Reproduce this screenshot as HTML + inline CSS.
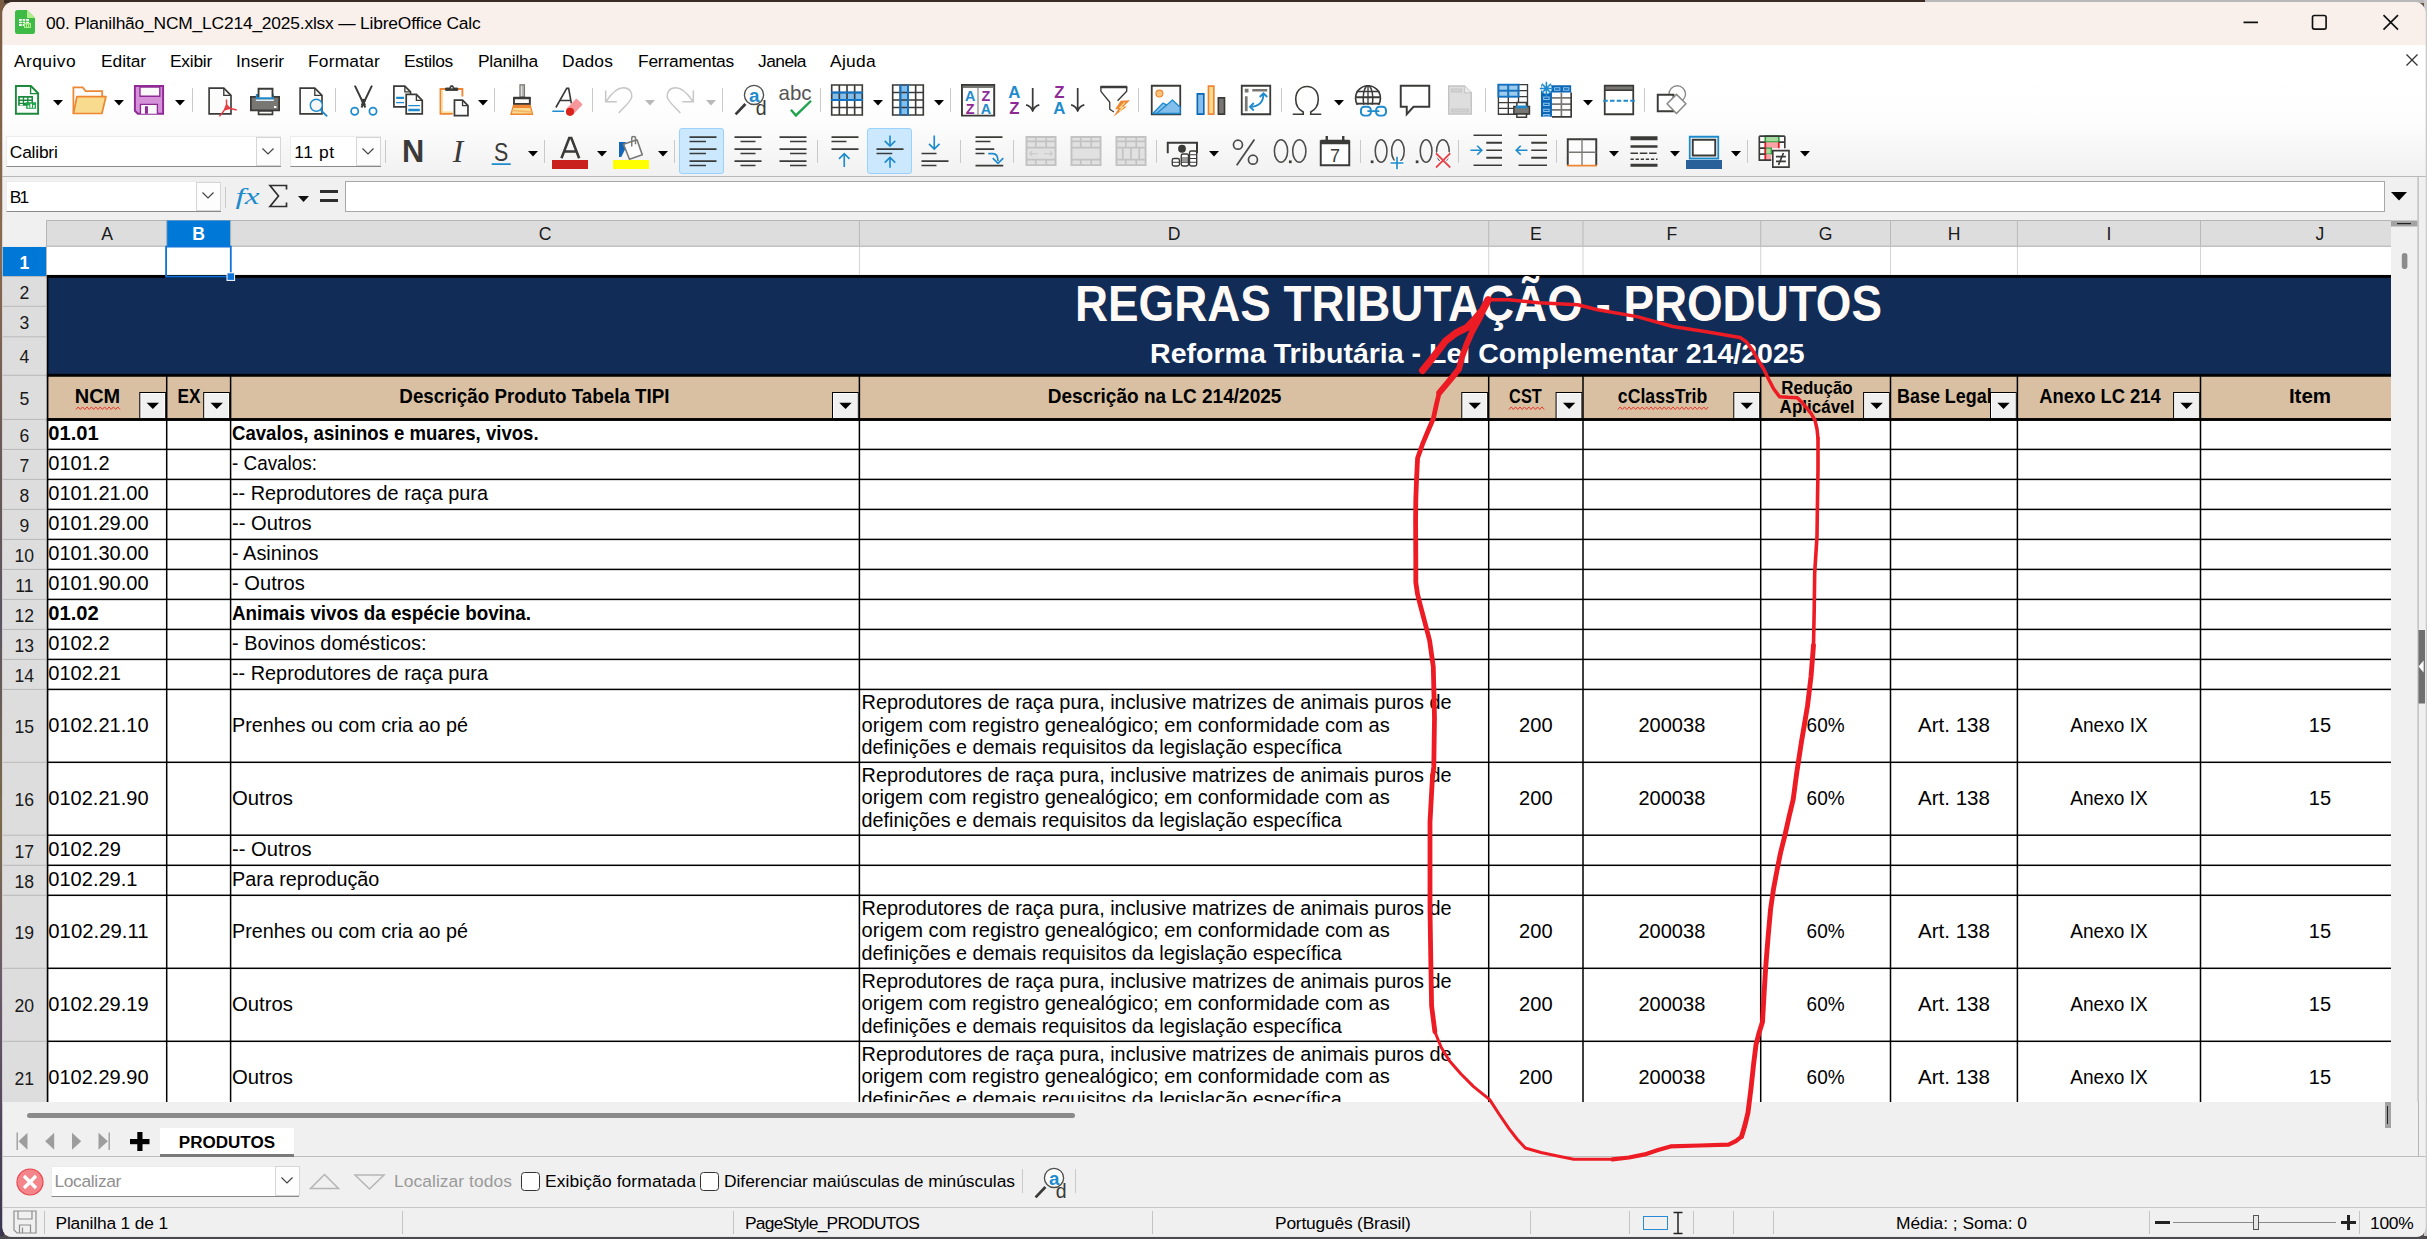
<!DOCTYPE html>
<html lang="pt-BR"><head><meta charset="utf-8">
<title>00. Planilhão_NCM_LC214_2025.xlsx — LibreOffice Calc</title>
<style>
html,body{margin:0;padding:0}
body{width:2427px;height:1239px;overflow:hidden;position:relative;background:#6d5546;font-family:"Liberation Sans", "DejaVu Sans", sans-serif;font-size:17.4px;color:#000}
.abs,.abs *{position:absolute}
div{box-sizing:border-box}
#win{left:0;top:0;width:2427px;height:1239px;clip-path:inset(2px 1.5px 2.2px 2.5px round 11px 11px 9px 9px);background:#f0f0f0}
.t{white-space:nowrap;line-height:20px;height:20px}
#titlebar{left:0;top:0;width:2427px;height:45px;background:#f9f0ec}
#menubar{left:0;top:45px;width:2427px;height:33px;background:#fff}
#toolbars{left:0;top:78px;width:2427px;height:98.5px;background:linear-gradient(#fff 0,#fdfdfd 45%,#f1f1f1 100%);border-bottom:1px solid #b9b9b9}
#formulabar{left:0;top:177px;width:2427px;height:43.5px;background:#f0f0f0}
.box{background:#fff;border-bottom:1.5px solid #8a8a8a;border-top:1px solid #ececec;border-left:1px solid #ececec}
.dd{background:#fdfdfd;border:1px solid #d6d6d6}
.sep{width:1px;background:#c9c9c9}
svg{overflow:visible}
svg text{font-family:"Liberation Sans", "DejaVu Sans", sans-serif}
.ic{width:36px;height:36px}
.gray{color:#999}
</style></head><body>

<div class="abs" id="desktop" style="left:0;top:0;width:2427px;height:1239px"><div style="left:0;top:0;width:1925px;height:3px;background:#3b2d25"></div><div style="left:1925px;top:0;width:502px;height:3px;background:#b9b9b9"></div><div style="left:0;top:0;width:4px;height:1239px;background:linear-gradient(#7a5a40 0,#8a6a50 20%,#6c5a55 35%,#5a5560 50%,#7b6a4a 66%,#6a5a6a 80%,#3a3550 100%)"></div><div style="left:2424px;top:0;width:3px;height:1239px;background:#c9c9c9"></div><div style="left:0;top:1236px;width:2427px;height:3px;background:#4a4a4e"></div></div>
<div class="abs" id="win">
<div id="titlebar">
<svg style="left:15px;top:10px" width="20" height="24" viewBox="0 0 20 24"><path d="M2.5 0H12l8 8v13.5a2.5 2.5 0 0 1-2.5 2.5h-15A2.5 2.5 0 0 1 0 21.500V2.5A2.500 2.500 0 0 1 2.500 0z" fill="#3dbb46"/><path d="M12 0l8 8h-8z" fill="#b0f08c"/><rect x="4" y="9" width="10" height="7" fill="#fff"/><path d="M4 11.300h10M4 13.600h10M7.300 9v7M10.600 9v7" stroke="#3dbb46" stroke-width="0.9"/><rect x="9" y="13" width="7" height="5" fill="#b0f08c"/><path d="M10.500 14.500v2.200M12.500 14.500v2.200M14.500 14.500v2.200" stroke="#3dbb46" stroke-width="1"/></svg>
<div class="t" id="wtitle" style="letter-spacing:-0.190px;left:46px;top:13px">00. Planilhão_NCM_LC214_2025.xlsx — LibreOffice Calc</div>
<svg style="left:2240px;top:12px" width="170" height="22" viewBox="0 0 170 22" fill="none" stroke="#111" stroke-width="1.650"><path d="M3.500 10.400h14.500"/><rect x="72.500" y="3.500" width="13.600" height="13.600" rx="1.800"/><path d="M143.500 3.200l14.500 14.500M158 3.200l-14.500 14.500"/></svg>
</div>
<div id="menubar">
<div class="t mi" id="m0" style="letter-spacing:0.433px;left:14px;top:5.500px">Arquivo</div>
<div class="t mi" id="m1" style="letter-spacing:-0.073px;left:101px;top:5.500px">Editar</div>
<div class="t mi" id="m2" style="letter-spacing:-0.250px;left:170px;top:5.500px">Exibir</div>
<div class="t mi" id="m3" style="letter-spacing:-0.047px;left:236px;top:5.500px">Inserir</div>
<div class="t mi" id="m4" style="letter-spacing:0.182px;left:308px;top:5.500px">Formatar</div>
<div class="t mi" id="m5" style="letter-spacing:-0.319px;left:404px;top:5.500px">Estilos</div>
<div class="t mi" id="m6" style="letter-spacing:-0.236px;left:478px;top:5.500px">Planilha</div>
<div class="t mi" id="m7" style="letter-spacing:0.144px;left:562px;top:5.500px">Dados</div>
<div class="t mi" id="m8" style="letter-spacing:-0.234px;left:638px;top:5.500px">Ferramentas</div>
<div class="t mi" id="m9" style="letter-spacing:-0.542px;left:758px;top:5.500px">Janela</div>
<div class="t mi" id="m10" style="letter-spacing:0.303px;left:830px;top:5.500px">Ajuda</div>
<svg style="left:2405px;top:8px" width="14" height="14" viewBox="0 0 14 14" stroke="#333" stroke-width="1.300"><path d="M1.500 1.500l11 11M12.500 1.500l-11 11"/></svg>
</div>
<div id="toolbars">
<svg class="ic" style="left:9.0px;top:4.0px" width="36" height="36" viewBox="0 0 24 24" fill="none" stroke-width="1"><path d="M4.600 2.700h10l4.800 4.800v13.700h-14.800z" fill="#fcfcfc" stroke="#1c8a3c" stroke-width="1.250"/><path d="M14.400 2.700v5h5" stroke="#1c8a3c" stroke-width="0.900"/><path d="M6.100 9.400h9.900v6.500h-9.900z" fill="#1c8a3c"/><path d="M7.200 10.500h2v1.200h-2zM10.100 10.500h2v1.200h-2zM13 10.500h2v1.200h-2zM7.200 12.600h2v1.200h-2zM10.100 12.600h2v1.200h-2zM13 12.600h2v1.200h-2zM7.200 14.600h2v1h-2z" fill="#fff"/><path d="M11.400 13.500h6.600v4.400h-6.600z" fill="#1ea54c"/><path d="M12.400 15.700h1.100v1.500h-1.100zM14.200 14.500h1.100v2.700h-1.100zM16 15.300h1.100v1.900h-1.100z" fill="#fff"/></svg>
<svg style="left:53.3px;top:22.4px" width="10" height="6" viewBox="0 0 10 6"><path d="M0 0h10l-5 5.600z" fill="#000"/></svg>
<svg class="ic" style="left:70.7px;top:4.0px" width="36" height="36" viewBox="0 0 24 24" fill="none" stroke-width="1"><path d="M1.600 21v-17.400h6.200l2 2.500h11v3.500" fill="#fcfcfc" stroke="#ed8733" stroke-width="1.150"/><path d="M1.600 21l2.400-11.300h19.300l-2.700 11.300z" fill="#f8db8f" stroke="#ed8733" stroke-width="1.150" stroke-linejoin="round"/></svg>
<svg style="left:114.3px;top:22.4px" width="10" height="6" viewBox="0 0 10 6"><path d="M0 0h10l-5 5.600z" fill="#000"/></svg>
<svg class="ic" style="left:131.0px;top:4.0px" width="36" height="36" viewBox="0 0 24 24" fill="none" stroke-width="1"><path d="M2.600 2.700h18.800v18.500h-16.800l-2-2z" fill="#d592d9" stroke="#8e2a96" stroke-width="1.300"/><path d="M6 3.300h13.200v6.200h-13.200z" fill="#f9f9f9" stroke="#8e2a96" stroke-width="0.900"/><path d="M6.300 21.200v-6.300h11.300v6.300" fill="#f9f9f9" stroke="#8e2a96" stroke-width="0.900"/><path d="M10.300 16.100v5.100" stroke="#8e2a96" stroke-width="2"/></svg>
<svg style="left:175.4px;top:22.4px" width="10" height="6" viewBox="0 0 10 6"><path d="M0 0h10l-5 5.600z" fill="#000"/></svg>
<div class="sep" style="left:192.0px;top:10.0px;height:23.5px"></div>
<svg class="ic" style="left:204.0px;top:4.0px" width="36" height="36" viewBox="0 0 24 24" fill="none" stroke-width="1"><path d="M3.400 4.100h9.800l4.800 4.800v12.300h-14.600z" fill="#fcfcfc" stroke="#3a3a38" stroke-width="1.100"/><path d="M13.200 4.100v4.800h4.800" stroke="#3a3a38" stroke-width="0.900"/><path d="M15 11.700v5M15 17l-4.700 5.900M15 17l6.800 1.700M13.600 18.600l1.400-3.400 2.200 2.300z" stroke="#e8393f" stroke-width="0.950" stroke-linejoin="round" fill="none"/></svg>
<svg class="ic" style="left:247.0px;top:4.0px" width="36" height="36" viewBox="0 0 24 24" fill="none" stroke-width="1"><path d="M2.600 9.900h18.800v9h-18.800z" fill="#797774" stroke="#3a3a38" stroke-width="1.200"/><path d="M5.900 8h12v3.600h-12z" fill="#1e8bcd"/><path d="M5.900 11.600h12v1h-12z" fill="#dfeefa"/><path d="M7.700 10.100v-5.600h9.300v5.600" fill="#fcfcfc" stroke="#3a3a38" stroke-width="1.250"/><path d="M7.700 19.200h9.300v2.400h-9.300z" fill="#fcfcfc" stroke="#3a3a38" stroke-width="1.100"/><path d="M18 16h1.600v1.300h-1.600z" fill="#fff"/></svg>
<svg class="ic" style="left:294.5px;top:4.0px" width="36" height="36" viewBox="0 0 24 24" fill="none" stroke-width="1"><path d="M3.400 4.100h9.800l4.800 4.800v12.300h-14.600z" fill="#fcfcfc" stroke="#3a3a38" stroke-width="1.100"/><path d="M13.200 4.100v4.800h4.800" stroke="#3a3a38" stroke-width="0.900"/><circle cx="14.200" cy="15.500" r="4" fill="#f7f7f7" stroke="#1e8bcd" stroke-width="0.950"/><path d="M17.100 18.600l4.300 4.300" stroke="#1e8bcd" stroke-width="1.250"/></svg>
<div class="sep" style="left:334.9px;top:10.0px;height:23.5px"></div>
<svg class="ic" style="left:345.5px;top:4.0px" width="36" height="36" viewBox="0 0 24 24" fill="none" stroke-width="1"><path d="M5.900 2.400l7 14.600M17.300 2.400l-7 14.600" stroke="#3a3a38" stroke-width="1.300"/><path d="M10.600 11.500l1.800 4M12.600 11.500l-1.800 4" stroke="#3a3a38" stroke-width="1.900"/><circle cx="5.800" cy="19.500" r="2.400" stroke="#1e8bcd" stroke-width="1.150"/><circle cx="18" cy="19.500" r="2.400" stroke="#1e8bcd" stroke-width="1.150"/></svg>
<svg class="ic" style="left:390.0px;top:4.0px" width="36" height="36" viewBox="0 0 24 24" fill="none" stroke-width="1"><path d="M2.600 2.800h7.300l3.800 3.800v10h-11.100z" fill="#fcfcfc" stroke="#3a3a38" stroke-width="1.150"/><path d="M9.900 2.800v3.800h3.800" stroke="#3a3a38" stroke-width="0.900"/><path d="M4.100 10.600h5.300" stroke="#1e8bcd" stroke-width="1.500"/><path d="M4.100 13.700h5.300" stroke="#1e8bcd" stroke-width="0.900"/><path d="M10.800 8.300h6.800l3.900 3.900v9.100h-10.700z" fill="#fcfcfc" stroke="#3a3a38" stroke-width="1.150"/><path d="M17.600 8.300v3.900h3.900" stroke="#3a3a38" stroke-width="0.900"/><path d="M12.200 15.700h7.700" stroke="#1e8bcd" stroke-width="0.900"/><path d="M12.200 18.700h7.700" stroke="#1e8bcd" stroke-width="1.600"/></svg>
<svg class="ic" style="left:435.5px;top:4.0px" width="36" height="36" viewBox="0 0 24 24" fill="none" stroke-width="1"><path d="M6.400 4.700h-3.400v16.500h8.200" stroke="#ed8733" stroke-width="1.250"/><path d="M14.500 4.700h3.100v5" stroke="#ed8733" stroke-width="1.250"/><path d="M4.100 5.900v14.200h7" stroke="#f8db8f" stroke-width="0.900"/><path d="M6.400 5.600v-1.600h2.700l.6-1.500h1.600l.6 1.500h2.600v1.600z" fill="#3a3a38" stroke="#3a3a38" stroke-width="0.600"/><path d="M10 3.400h1v1h-1z" fill="#ddd"/><path d="M12.300 12.100h5.400l3.600 3.600v6.700h-9z" fill="#fcfcfc" stroke="#3a3a38" stroke-width="1.150"/><path d="M17.700 12.100v3.600h3.600" stroke="#3a3a38" stroke-width="0.900"/></svg>
<svg style="left:477.6px;top:22.4px" width="10" height="6" viewBox="0 0 10 6"><path d="M0 0h10l-5 5.600z" fill="#000"/></svg>
<div class="sep" style="left:494.0px;top:10.0px;height:23.5px"></div>
<svg class="ic" style="left:503.0px;top:4.0px" width="36" height="36" viewBox="0 0 24 24" fill="none" stroke-width="1"><path d="M11.300 1.900h3v8h-3z" fill="#b5b5b3" stroke="#797774" stroke-width="0.800"/><path d="M12.300 2.500v7" stroke="#e0e0e0" stroke-width="0.800"/><path d="M7.300 10.600h10.600v4h-10.600z" fill="#fcfcfc" stroke="#3a3a38" stroke-width="1.300"/><path d="M7 10.700h11.200" stroke="#3a3a38" stroke-width="1.600"/><path d="M7 15.600h11.200l1.500 5.900h-14.400z" fill="#f8db8f" stroke="#ed8733" stroke-width="0.900"/><path d="M6.800 16.400h11.600" stroke="#ed8733" stroke-width="1.700"/><path d="M6.200 19l12.800 1" stroke="#f4b46a" stroke-width="0.900"/></svg>
<svg class="ic" style="left:548.7px;top:4.0px" width="36" height="36" viewBox="0 0 24 24" fill="none" stroke-width="1"><path d="M4.600 17l7.200-12.800h1.300l1.800 10M7.300 12.300h7.200" stroke="#3a3a38" stroke-width="1.100"/><path d="M2.200 19.500h7.800" stroke="#1e8bcd" stroke-width="0.900"/><path d="M12.300 18l6-6.200 3.300 3.200-6 6.200z" fill="#f6979c" stroke="#f6979c" stroke-width="1.200" stroke-linejoin="round"/><circle cx="14" cy="19.900" r="2.700" fill="#d9231e"/></svg>
<div class="sep" style="left:592.1px;top:10.0px;height:23.5px"></div>
<svg class="ic" style="left:600.5px;top:4.0px" width="36" height="36" viewBox="0 0 24 24" fill="none" stroke-width="1"><path d="M3.100 5.700v7.500h7.400M3.600 12.700c4.400-6.700 8.400-8.900 11.400-8.900 4 0 6 3.200 5.500 6.200-.5 3-4.500 6-8.700 10.600" stroke="#c6c6c6" stroke-width="1"/></svg>
<svg style="left:644.5px;top:22.4px" width="10" height="6" viewBox="0 0 10 6"><path d="M0 0h10l-5 5.600z" fill="#b9b9b9"/></svg>
<svg class="ic" style="left:661.5px;top:4.0px" width="36" height="36" viewBox="0 0 24 24" fill="none" stroke-width="1"><path d="M20.900 5.700v7.500h-7.400M20.400 12.700c-4.400-6.700-8.400-8.900-11.400-8.900-4 0-6 3.200-5.500 6.200.5 3 4.500 6 8.700 10.600" stroke="#c6c6c6" stroke-width="1"/></svg>
<svg style="left:705.5px;top:22.4px" width="10" height="6" viewBox="0 0 10 6"><path d="M0 0h10l-5 5.600z" fill="#b9b9b9"/></svg>
<div class="sep" style="left:722.3px;top:10.0px;height:23.5px"></div>
<svg class="ic" style="left:733.0px;top:4.0px" width="36" height="36" viewBox="0 0 24 24" fill="none" stroke-width="1"><circle cx="14" cy="8.600" r="6.400" fill="#fdfdfd" stroke="#4f4f4d" stroke-width="0.900"/><path d="M8.300 14.700l-6.600 6.900" stroke="#3a3a38" stroke-width="1.800"/><text x="10.600" y="13.200" font-size="12.500" font-weight="700" fill="#1e8bcd" stroke="none">a</text><text x="15.200" y="21.800" font-size="13" fill="#3a3a38" stroke="none">d</text></svg>
<svg class="ic" style="left:777.4px;top:4.0px" width="36" height="36" viewBox="0 0 24 24" fill="none" stroke-width="1"><text x="1" y="11.800" font-size="14" fill="#555553" stroke="none" textLength="22" lengthAdjust="spacingAndGlyphs">abc</text><path d="M9.300 18.500l3.300 3.800 10.100-9.800" stroke="#1ea54c" stroke-width="1.600"/></svg>
<div class="sep" style="left:820.0px;top:10.0px;height:23.5px"></div>
<svg class="ic" style="left:829.0px;top:4.0px" width="36" height="36" viewBox="0 0 24 24" fill="none" stroke-width="1"><path d="M1.800 2h20.400v20h-20.400z" fill="#fff"/><path d="M1.300 7h21.400v5h-21.400z" fill="#83beec"/><path d="M1.800 2h20.400v20h-20.400zM1.800 7h20.400M1.800 12h20.400M1.800 17h20.400M6.900 2v20M12 2v20M17.100 2v20" stroke="#3a3a38" stroke-width="1.100"/><path d="M1.300 7h21.400M1.300 12h21.400" stroke="#1273c6" stroke-width="1.300"/></svg>
<svg style="left:873.0px;top:22.4px" width="10" height="6" viewBox="0 0 10 6"><path d="M0 0h10l-5 5.600z" fill="#000"/></svg>
<svg class="ic" style="left:890.0px;top:4.0px" width="36" height="36" viewBox="0 0 24 24" fill="none" stroke-width="1"><path d="M1.800 2h20.400v20h-20.400z" fill="#fff"/><path d="M6.900 1.500h5.100v21h-5.100z" fill="#83beec"/><path d="M1.800 2h20.400v20h-20.400zM1.800 7h20.400M1.800 12h20.400M1.800 17h20.400M6.900 2v20M12 2v20M17.100 2v20" stroke="#3a3a38" stroke-width="1.100"/><path d="M6.900 1.500v21M12 1.500v21" stroke="#1273c6" stroke-width="1.300"/></svg>
<svg style="left:934.0px;top:22.4px" width="10" height="6" viewBox="0 0 10 6"><path d="M0 0h10l-5 5.600z" fill="#000"/></svg>
<div class="sep" style="left:950.2px;top:10.0px;height:23.5px"></div>
<svg class="ic" style="left:959.5px;top:4.0px" width="36" height="36" viewBox="0 0 24 24" fill="none" stroke-width="1"><path d="M1.300 2h21.500v20.400h-21.500z" fill="#fcfcfc" stroke="#3a3a38" stroke-width="1.300"/><path d="M1.900 3.200h20.300" stroke="#797774" stroke-width="1.500"/><path d="M12 4v17.800" stroke="#797774" stroke-width="0.700"/><text x="6.8" y="12.6" font-size="9.6" font-weight="700" fill="#1e8bcd" stroke="none" text-anchor="middle">A</text><text x="6.8" y="21" font-size="9.6" font-weight="700" fill="#8e2a96" stroke="none" text-anchor="middle">Z</text><text x="17.3" y="12.6" font-size="9.6" font-weight="700" fill="#8e2a96" stroke="none" text-anchor="middle">Z</text><text x="17.3" y="21" font-size="9.6" font-weight="700" fill="#1e8bcd" stroke="none" text-anchor="middle">A</text></svg>
<svg class="ic" style="left:1006.0px;top:4.0px" width="36" height="36" viewBox="0 0 24 24" fill="none" stroke-width="1"><text x="5.6" y="10.7" font-size="11.2" font-weight="700" fill="#1e8bcd" stroke="none" text-anchor="middle">A</text><text x="5.6" y="21.6" font-size="11.2" font-weight="700" fill="#8e2a96" stroke="none" text-anchor="middle">Z</text><path d="M17.800 4v15.200M13.400 15.200c2.200.6 3.800 2.200 4.400 4.200.6-2 2.200-3.600 4.400-4.200" stroke="#3a3a38" stroke-width="1.150" stroke-linejoin="round"/></svg>
<svg class="ic" style="left:1051.0px;top:4.0px" width="36" height="36" viewBox="0 0 24 24" fill="none" stroke-width="1"><text x="5.6" y="10.7" font-size="11.2" font-weight="700" fill="#8e2a96" stroke="none" text-anchor="middle">Z</text><text x="5.6" y="21.6" font-size="11.2" font-weight="700" fill="#1e8bcd" stroke="none" text-anchor="middle">A</text><path d="M17.800 4v15.200M13.400 15.200c2.200.6 3.800 2.200 4.400 4.200.6-2 2.200-3.600 4.400-4.200" stroke="#3a3a38" stroke-width="1.150" stroke-linejoin="round"/></svg>
<svg class="ic" style="left:1097.0px;top:4.0px" width="36" height="36" viewBox="0 0 24 24" fill="none" stroke-width="1"><path d="M2.600 3.300v2.900l5.900 7.300v4.700l2.800 1.800M19.800 3.300v2.900l-6.100 6.300" stroke="#3a3a38" stroke-width="0.900" stroke-linejoin="round" fill="none"/><path d="M2.200 3.300h18" stroke="#3a3a38" stroke-width="1.700"/><path d="M15.800 12.500l6.200-.3-4.400 4.200h2.300l-9.100 6.800 3.400-5h-2.100z" fill="#ed8733" stroke="none"/><path d="M18.500 13.600l-3 3.400h1.800l-2.300 2.600" stroke="#f8db8f" stroke-width="0.900"/></svg>
<div class="sep" style="left:1138.1px;top:10.0px;height:23.5px"></div>
<svg class="ic" style="left:1148.0px;top:4.0px" width="36" height="36" viewBox="0 0 24 24" fill="none" stroke-width="1"><path d="M2.500 2.500h19v19h-19z" fill="#fcfcfc" stroke="#3a3a38" stroke-width="1.200"/><path d="M3.200 21l6.700-6.900 2.600 1.200 3.800-3.300 5.100 4.900v4.100z" fill="#83beec" stroke="#1e8bcd" stroke-width="0.900" stroke-linejoin="round"/><path d="M5.800 21l6.700-5.700" stroke="#1e8bcd" stroke-width="0.800"/><circle cx="7.600" cy="7.700" r="2.300" fill="#f8c27a" stroke="#ed8733" stroke-width="0.800"/></svg>
<svg class="ic" style="left:1192.6px;top:4.0px" width="36" height="36" viewBox="0 0 24 24" fill="none" stroke-width="1"><path d="M2.900 7.900h4.300v13.500h-4.300z" fill="#83beec" stroke="#0b66b5" stroke-width="1.100"/><path d="M10.300 2.700h3.600v18.700h-3.600z" fill="#f8db8f" stroke="#ed8733" stroke-width="1.100"/><path d="M16.900 10.600h4.100v10.800h-4.100z" fill="#797774" stroke="#3a3a38" stroke-width="1.100"/></svg>
<svg class="ic" style="left:1238.0px;top:4.0px" width="36" height="36" viewBox="0 0 24 24" fill="none" stroke-width="1"><path d="M2.500 2.500h19v19h-19z" fill="#fff" stroke="#3a3a38" stroke-width="1.200"/><path d="M4.500 4.500h2.500v2.500h-2.500z" fill="#797774"/><path d="M9.500 5.500h10M5.500 9.500v10" stroke="#797774" stroke-width="1.800"/><path d="M8 16.500c6 0 9-3 9-9M10.500 14l-2.500 2.500 2.500 2.500M14.500 10l2.500-2.500 2.500 2.500" stroke="#1e8bcd" stroke-width="1.200"/></svg>
<div class="sep" style="left:1280.9px;top:10.0px;height:23.5px"></div>
<svg class="ic" style="left:1289.0px;top:4.0px" width="36" height="36" viewBox="0 0 24 24" fill="none" stroke-width="1"><path d="M2.500 21.500h7v-1.500c-3-1.500-5-4.500-5-8.500 0-5 3-8.500 7.500-8.500s7.500 3.500 7.500 8.500c0 4-2 7-5 8.500v1.500h7" stroke="#3a3a38" stroke-width="1.050"/></svg>
<svg style="left:1334.0px;top:22.4px" width="10" height="6" viewBox="0 0 10 6"><path d="M0 0h10l-5 5.600z" fill="#000"/></svg>
<svg class="ic" style="left:1353.0px;top:4.0px" width="36" height="36" viewBox="0 0 24 24" fill="none" stroke-width="1"><clipPath id="gl"><rect x="0" y="0" width="24" height="15.200"/></clipPath><g clip-path="url(#gl)"><circle cx="10" cy="10.800" r="8.300" fill="#fcfcfc" stroke="#3a3a38" stroke-width="1.100"/><ellipse cx="10" cy="10.800" rx="3.200" ry="8.300" stroke="#3a3a38" stroke-width="1"/><path d="M10 2.500v13M2.300 6.300h15.400" stroke="#3a3a38" stroke-width="0.900"/><path d="M1.500 10.200h17M2 14.500h16" stroke="#3a3a38" stroke-width="1.400"/></g><rect x="5.300" y="16.500" width="6.600" height="5.900" rx="2.300" stroke="#1e8bcd" stroke-width="1.300"/><rect x="15.400" y="16.500" width="6.600" height="5.900" rx="2.300" stroke="#1e8bcd" stroke-width="1.300"/><path d="M9.600 19.450h8" stroke="#1e8bcd" stroke-width="1.100"/></svg>
<svg class="ic" style="left:1397.0px;top:4.0px" width="36" height="36" viewBox="0 0 24 24" fill="none" stroke-width="1"><path d="M2.500 2.500h19v14h-10.500l-4.500 5v-5h-4z" fill="#fff" stroke="#3a3a38" stroke-width="1.300"/></svg>
<svg class="ic" style="left:1442.0px;top:4.0px" width="36" height="36" viewBox="0 0 24 24" fill="none" stroke-width="1"><path d="M4.500 2.700h10.500l4.500 4.500v14.200h-15z" fill="#dedede" stroke="#c4c4c4" stroke-width="1"/><path d="M15 2.700v4.500h4.500" stroke="#c9c9c9" stroke-width="0.900" fill="#ececec"/><path d="M6.300 4.700h6.700v2h-6.700zM6.300 18h11.400v2h-11.400z" fill="#d2d2d2" stroke="#c6c6c6" stroke-width="0.700"/></svg>
<div class="sep" style="left:1484.8px;top:10.0px;height:23.5px"></div>
<svg class="ic" style="left:1496.0px;top:4.0px" width="36" height="36" viewBox="0 0 24 24" fill="none" stroke-width="1"><path d="M1.600 1.700h19.400v19.800h-19.400z" fill="#fcfcfc"/><path d="M1.600 1.700h13.400v8h-13.400z" fill="#9ccbee"/><path d="M1.600 1.700h19.400v19.800h-19.400zM1.600 5.700h19.400M1.600 9.700h19.400M1.600 13.700h19.400M1.600 17.600h19.400M8.200 1.700v19.800M15 1.700v19.800" stroke="#3a3a38" stroke-width="0.900"/><path d="M1.600 1.700h13.400v8h-13.400zM1.600 5.700h13.400M8.200 1.700v8" stroke="#1273c6" stroke-width="1.200"/><path d="M11.900 16.300h10.400v5h-10.400z" fill="#797774" stroke="#3a3a38" stroke-width="1"/><path d="M13.900 16.600v-3h6.400v3" fill="#fcfcfc" stroke="#3a3a38" stroke-width="1"/><path d="M13.400 15.600h7.400v1.900h-7.400z" fill="#1e8bcd"/><path d="M13.900 21.300h6.400v2.200h-6.400z" fill="#fcfcfc" stroke="#3a3a38" stroke-width="1"/></svg>
<svg class="ic" style="left:1538.0px;top:4.0px" width="36" height="36" viewBox="0 0 24 24" fill="none" stroke-width="1"><path d="M2 2.100h20.100v21.100h-20.100z" fill="#fcfcfc"/><path d="M2 2.100h20.100v4.900h-12.800v16.200h-7.300z" fill="#0b66b5"/><path d="M9.300 10.600h12.800M9.300 14.700h12.800M9.300 18.600h12.800M15.600 7v16.200" stroke="#797774" stroke-width="1.100"/><path d="M9.300 23.200h12.800v-16.200" stroke="#3a3a38" stroke-width="1.100" fill="none"/><path d="M3.800 10h3.600v1.600h-3.600zM3.800 14.100h3.600v1.600h-3.600zM3.800 18.100h3.600v1.600h-3.600zM3.800 21.600h3.600v1.200h-3.600zM11 3.800h3.600v1.700h-3.600zM17 3.800h3.600v1.700h-3.600z" fill="none" stroke="#8cc4ef" stroke-width="0.700"/><circle cx="5.600" cy="4.300" r="3.600" fill="#e9f3fb"/><path d="M5.600 -0.200v9.600M1.200 4.300h8.800M2.500 1.200l6.200 6.200M8.700 1.200l-6.200 6.200" stroke="#1e8bcd" stroke-width="1"/></svg>
<svg style="left:1582.5px;top:22.4px" width="10" height="6" viewBox="0 0 10 6"><path d="M0 0h10l-5 5.600z" fill="#000"/></svg>
<svg class="ic" style="left:1600.8px;top:4.0px" width="36" height="36" viewBox="0 0 24 24" fill="none" stroke-width="1"><path d="M2.500 2.500h19v19h-19z" fill="#fff" stroke="#3a3a38" stroke-width="1.200"/><path d="M2.500 2.500h19v3h-19z" fill="#797774" stroke="#3a3a38" stroke-width="1"/><path d="M1.500 12.500h22" stroke="#1e8bcd" stroke-width="1.300" stroke-dasharray="3 1.500"/></svg>
<div class="sep" style="left:1643.9px;top:10.0px;height:23.5px"></div>
<svg class="ic" style="left:1654.0px;top:4.0px" width="36" height="36" viewBox="0 0 24 24" fill="none" stroke-width="1"><circle cx="15.500" cy="8" r="5.500" fill="#fff" stroke="#8b8b8b" stroke-width="0.900"/><path d="M2.500 8.500h10.500v11h-10.500z" fill="#fff" stroke="#3a3a38" stroke-width="1.300"/><path d="M15 8.200l6.300 6.300-6.300 6.500-6.300-6.500z" fill="#fff" stroke="#8b8b8b" stroke-width="1.100" stroke-linejoin="round"/></svg>
<div class="box" style="left:5.800px;top:58px;width:275.200px;height:31px"></div>
<div class="t" id="fn" style="letter-spacing:-0.214px;left:9.800px;top:63.5px">Calibri</div>
<div class="dd" style="left:255.500px;top:58.5px;width:25px;height:29.500px"></div>
<svg style="left:261px;top:68.5px" width="14" height="9" viewBox="0 0 14 9" fill="none" stroke="#444" stroke-width="1.200"><path d="M1.500 1.500l5.500 5.500 5.500-5.500"/></svg>
<div class="box" style="left:290.200px;top:58px;width:90.800px;height:31px"></div>
<div class="t" id="fs" style="letter-spacing:0.602px;left:294.200px;top:63.5px">11 pt</div>
<div class="dd" style="left:355.500px;top:58.5px;width:25px;height:29.500px"></div>
<svg style="left:361px;top:68.5px" width="14" height="9" viewBox="0 0 14 9" fill="none" stroke="#444" stroke-width="1.200"><path d="M1.500 1.500l5.500 5.500 5.500-5.500"/></svg>
<div style="left:679px;top:50px;width:45px;height:46px;background:#cce8ff;border:1px solid #99d1ff;border-radius:3px"></div>
<div style="left:867px;top:50px;width:45px;height:46px;background:#cce8ff;border:1px solid #99d1ff;border-radius:3px"></div>
<div class="sep" style="left:385.3px;top:61.5px;height:23.5px"></div>
<svg class="ic" style="left:395.0px;top:55.0px" width="36" height="36" viewBox="0 0 24 24" fill="none" stroke-width="1"><text x="12" y="19.300" font-size="20.500" font-weight="700" fill="#3a3a38" stroke="none" text-anchor="middle">N</text></svg>
<svg class="ic" style="left:439.7px;top:55.0px" width="36" height="36" viewBox="0 0 24 24" fill="none" stroke-width="1"><text x="12" y="19.300" font-size="21" style="font-family:'Liberation Serif',serif;font-style:italic" fill="#3a3a38" stroke="none" text-anchor="middle">I</text></svg>
<svg class="ic" style="left:483.0px;top:55.0px" width="36" height="36" viewBox="0 0 24 24" fill="none" stroke-width="1"><text x="12" y="18.600" font-size="17" fill="#3a3a38" stroke="none" text-anchor="middle" textLength="9.500" lengthAdjust="spacingAndGlyphs">S</text><path d="M5.800 20.700h12.700" stroke="#1e8bcd" stroke-width="1.100"/></svg>
<svg style="left:527.5px;top:73.3px" width="10" height="6" viewBox="0 0 10 6"><path d="M0 0h10l-5 5.600z" fill="#000"/></svg>
<div class="sep" style="left:544.0px;top:61.5px;height:23.5px"></div>
<svg class="ic" style="left:552.0px;top:55.0px" width="36" height="36" viewBox="0 0 24 24" fill="none" stroke-width="1"><path d="M6.300 16.800l5.200-13.500h1.400l5.200 13.500M8.300 12.300h8" stroke="#3a3a38" stroke-width="1.700"/><path d="M0 18h24v6h-24z" fill="#c9211e"/></svg>
<svg style="left:596.6px;top:73.3px" width="10" height="6" viewBox="0 0 10 6"><path d="M0 0h10l-5 5.600z" fill="#000"/></svg>
<svg class="ic" style="left:613.0px;top:55.0px" width="36" height="36" viewBox="0 0 24 24" fill="none" stroke-width="1"><path d="M4 6h4.500v4l-3 6h-1.500z" fill="#1467b8"/><path d="M7 7.500l9-3 3.500 10-8.500 3z" fill="#fff" stroke="#7a7a78" stroke-width="1.100" stroke-linejoin="round"/><path d="M12.500 9v-5.500c0-1.500 2.500-1.500 2.500 0v4" stroke="#7a7a78" stroke-width="1"/><path d="M0 18h24v6h-24z" fill="#ffff00"/></svg>
<svg style="left:657.6px;top:73.3px" width="10" height="6" viewBox="0 0 10 6"><path d="M0 0h10l-5 5.600z" fill="#000"/></svg>
<div class="sep" style="left:674.0px;top:61.5px;height:23.5px"></div>
<svg class="ic" style="left:684.5px;top:55.0px" width="36" height="36" viewBox="0 0 24 24" fill="none" stroke-width="1"><g transform="translate(0,-0.8)"><path d="M3 3.5h18" stroke="#3a3a38" stroke-width="1.2"/><path d="M3 6.5h11" stroke="#3a3a38" stroke-width="1"/><path d="M3 11.5h18" stroke="#3a3a38" stroke-width="1.2"/><path d="M3 14.5h11" stroke="#3a3a38" stroke-width="1"/><path d="M3 19.5h18" stroke="#3a3a38" stroke-width="1.2"/><path d="M3 22.5h11" stroke="#3a3a38" stroke-width="1"/></g></svg>
<svg class="ic" style="left:729.5px;top:55.0px" width="36" height="36" viewBox="0 0 24 24" fill="none" stroke-width="1"><g transform="translate(0,-0.8)"><path d="M3 3.5h18" stroke="#3a3a38" stroke-width="1.2"/><path d="M7 6.5h10" stroke="#3a3a38" stroke-width="1"/><path d="M3 11.5h18" stroke="#3a3a38" stroke-width="1.2"/><path d="M7 14.5h10" stroke="#3a3a38" stroke-width="1"/><path d="M3 19.5h18" stroke="#3a3a38" stroke-width="1.2"/><path d="M7 22.5h10" stroke="#3a3a38" stroke-width="1"/></g></svg>
<svg class="ic" style="left:774.5px;top:55.0px" width="36" height="36" viewBox="0 0 24 24" fill="none" stroke-width="1"><g transform="translate(0,-0.8)"><path d="M3 3.5h18" stroke="#3a3a38" stroke-width="1.2"/><path d="M10 6.5h11" stroke="#3a3a38" stroke-width="1"/><path d="M3 11.5h18" stroke="#3a3a38" stroke-width="1.2"/><path d="M10 14.5h11" stroke="#3a3a38" stroke-width="1"/><path d="M3 19.5h18" stroke="#3a3a38" stroke-width="1.2"/><path d="M10 22.5h11" stroke="#3a3a38" stroke-width="1"/></g></svg>
<div class="sep" style="left:816.9px;top:61.5px;height:23.5px"></div>
<svg class="ic" style="left:827.0px;top:55.0px" width="36" height="36" viewBox="0 0 24 24" fill="none" stroke-width="1"><g transform="translate(0,-0.8)"><path d="M3 3.5h18" stroke="#3a3a38" stroke-width="1.2"/><path d="M3 6.5h10" stroke="#3a3a38" stroke-width="1"/><path d="M3 11.5h18" stroke="#3a3a38" stroke-width="1.2"/><path d="M11.5 23.5v-9.0M8.0 18.0l3.500-3.500 3.500 3.500" stroke="#1e8bcd" stroke-width="1.100"/></g></svg>
<svg class="ic" style="left:872.0px;top:55.0px" width="36" height="36" viewBox="0 0 24 24" fill="none" stroke-width="1"><g transform="translate(0,-0.8)"><path d="M12 2.5v7.0M8.5 6.0l3.500 3.500 3.500-3.500" stroke="#1e8bcd" stroke-width="1.100"/><path d="M3 11.5h18" stroke="#3a3a38" stroke-width="1.2"/><path d="M3 14.5h10.5" stroke="#3a3a38" stroke-width="1"/><path d="M12 24v-7M8.5 20.5l3.500-3.500 3.500 3.500" stroke="#1e8bcd" stroke-width="1.100"/></g></svg>
<svg class="ic" style="left:917.4px;top:55.0px" width="36" height="36" viewBox="0 0 24 24" fill="none" stroke-width="1"><g transform="translate(0,-0.8)"><path d="M11.5 2.5v9.0M8.0 8.0l3.500 3.500 3.500-3.500" stroke="#1e8bcd" stroke-width="1.100"/><path d="M3 14.5h10" stroke="#3a3a38" stroke-width="1"/><path d="M3 19.5h18" stroke="#3a3a38" stroke-width="1.2"/><path d="M3 22.5h10" stroke="#3a3a38" stroke-width="1"/></g></svg>
<div class="sep" style="left:960.1px;top:61.5px;height:23.5px"></div>
<svg class="ic" style="left:971.0px;top:55.0px" width="36" height="36" viewBox="0 0 24 24" fill="none" stroke-width="1"><g transform="translate(0,-0.8)"><path d="M3 3.5h18" stroke="#3a3a38" stroke-width="1.2"/><path d="M3 6.5h10" stroke="#3a3a38" stroke-width="1"/><path d="M3 11.5h12.5" stroke="#3a3a38" stroke-width="1.2"/><path d="M3 14.5h6" stroke="#3a3a38" stroke-width="1"/><path d="M3 22.5h18.5" stroke="#3a3a38" stroke-width="1.2"/><path d="M11.500 14.500h3c2.500 0 3.500 1.500 3.500 5M14.500 17.500l3.500 3.500 3.500-3.500" stroke="#1e8bcd" stroke-width="1.100"/></g></svg>
<div class="sep" style="left:1013.0px;top:61.5px;height:23.5px"></div>
<svg class="ic" style="left:1023.0px;top:55.0px" width="36" height="36" viewBox="0 0 24 24" fill="none" stroke-width="1"><path d="M2.300 2.700h19.400v18.700h-19.400z" fill="#e1e1e1" stroke="#c2c2c2" stroke-width="1.300"/><path d="M2.300 5.600h19.400M2.300 9.700h19.400M2.300 17.700h19.400M8.500 2.700v7M15.500 2.700v7M8.500 17.700v3.700M15.500 17.700v3.700" stroke="#c2c2c2" stroke-width="1.100"/><path d="M4.500 13.700h5.500M14 13.700h5.500M6 12.200l-1.500 1.500 1.500 1.500M18 12.200l1.500 1.500-1.500 1.500" stroke="#cbcbcb" stroke-width="0.900"/></svg>
<svg class="ic" style="left:1068.0px;top:55.0px" width="36" height="36" viewBox="0 0 24 24" fill="none" stroke-width="1"><path d="M2.300 2.700h19.400v18.700h-19.400z" fill="#e1e1e1" stroke="#c2c2c2" stroke-width="1.300"/><path d="M2.300 5.600h19.400M2.300 9.700h19.400M2.300 17.700h19.400M8.500 2.700v7M15.500 2.700v7M8.500 17.700v3.700M15.500 17.700v3.700" stroke="#c2c2c2" stroke-width="1.100"/></svg>
<svg class="ic" style="left:1113.0px;top:55.0px" width="36" height="36" viewBox="0 0 24 24" fill="none" stroke-width="1"><path d="M2.300 2.700h19.400v18.700h-19.400z" fill="#e1e1e1" stroke="#c2c2c2" stroke-width="1.300"/><path d="M2.300 5.600h19.400M2.300 9.700h19.400M2.300 17.700h19.400M8.500 2.700v7M15.500 2.700v7M8.500 17.700v3.700M15.500 17.700v3.700" stroke="#c2c2c2" stroke-width="1.100"/><path d="M6.500 9.700v8M12 9.700v8M17.500 9.700v8" stroke="#c2c2c2" stroke-width="1.100"/></svg>
<div class="sep" style="left:1155.5px;top:61.5px;height:23.5px"></div>
<svg class="ic" style="left:1164.0px;top:55.0px" width="36" height="36" viewBox="0 0 24 24" fill="none" stroke-width="1"><path d="M2.500 13.500v-7h19.500v7" stroke="#3a3a38" stroke-width="1.300"/><circle cx="12" cy="10.500" r="2.600" fill="#3a3a38"/><rect x="5.5" y="17" width="4.800" height="5" rx="1.200" fill="#fff" stroke="#3a3a38" stroke-width="0.900"/><path d="M5.5 19.5h4.800" stroke="#3a3a38" stroke-width="0.700"/><rect x="11.5" y="14" width="4.800" height="8" rx="1.200" fill="#fff" stroke="#3a3a38" stroke-width="0.900"/><path d="M11.5 18.0h4.800" stroke="#3a3a38" stroke-width="0.700"/><rect x="17" y="12" width="4.800" height="10" rx="1.200" fill="#fff" stroke="#3a3a38" stroke-width="0.900"/><path d="M17 17.0h4.800" stroke="#3a3a38" stroke-width="0.700"/><path d="M11.500 16.700h4.800M11.500 19.400h4.800M17 14.500h4.800M17 19.500h4.800" stroke="#3a3a38" stroke-width="0.700"/></svg>
<svg style="left:1208.5px;top:73.3px" width="10" height="6" viewBox="0 0 10 6"><path d="M0 0h10l-5 5.600z" fill="#000"/></svg>
<svg class="ic" style="left:1227.0px;top:55.0px" width="36" height="36" viewBox="0 0 24 24" fill="none" stroke-width="1"><circle cx="7.300" cy="7.800" r="3" stroke="#4d4d4b" stroke-width="1.150"/><circle cx="17.300" cy="17.800" r="3" stroke="#4d4d4b" stroke-width="1.150"/><path d="M18.300 4.300l-11.800 17.200" stroke="#4d4d4b" stroke-width="1.200"/></svg>
<svg class="ic" style="left:1272.0px;top:55.0px" width="36" height="36" viewBox="0 0 24 24" fill="none" stroke-width="1"><ellipse cx="6" cy="12" rx="4.4" ry="7.5" stroke="#4d4d4b" stroke-width="1.050"/><ellipse cx="18.2" cy="12" rx="4.4" ry="7.5" stroke="#4d4d4b" stroke-width="1.050"/><rect x="11.300" y="18.300" width="1.800" height="1.800" fill="#3a3a38"/></svg>
<svg class="ic" style="left:1317.0px;top:55.0px" width="36" height="36" viewBox="0 0 24 24" fill="none" stroke-width="1"><path d="M2.500 5.500h19v16h-19z" fill="#fff" stroke="#3a3a38" stroke-width="1.300"/><path d="M2.500 4.500h19v3h-19z" fill="#3a3a38"/><path d="M6.500 2v3M17.500 2v3" stroke="#3a3a38" stroke-width="1.600"/><text x="12" y="19.500" font-size="12" fill="#3a3a38" stroke="none" text-anchor="middle">7</text></svg>
<div class="sep" style="left:1360.0px;top:61.5px;height:23.5px"></div>
<svg class="ic" style="left:1369.5px;top:55.0px" width="36" height="36" viewBox="0 0 24 24" fill="none" stroke-width="1"><rect x="0.500" y="18.300" width="1.800" height="1.800" fill="#3a3a38"/><ellipse cx="7.4" cy="12" rx="3.9" ry="7.5" stroke="#4d4d4b" stroke-width="1.050"/><ellipse cx="18.6" cy="12" rx="4.2" ry="7.5" stroke="#4d4d4b" stroke-width="1.050"/><path d="M18 15.500v9M13.500 20h9" stroke="#fff" stroke-width="3"/><path d="M18 15.800v8.400M13.700 20h8.600" stroke="#1e8bcd" stroke-width="1.100"/></svg>
<svg class="ic" style="left:1414.5px;top:55.0px" width="36" height="36" viewBox="0 0 24 24" fill="none" stroke-width="1"><rect x="0.500" y="18.300" width="1.800" height="1.800" fill="#3a3a38"/><ellipse cx="7.4" cy="12" rx="3.9" ry="7.5" stroke="#4d4d4b" stroke-width="1.050"/><ellipse cx="18.6" cy="12" rx="4.2" ry="7.5" stroke="#4d4d4b" stroke-width="1.050"/><path d="M14 13.500l9.500 9.500M23.500 13.500l-9.500 9.500" stroke="#fff" stroke-width="3"/><path d="M14 13.500l9.500 9.500M23.500 13.500l-9.500 9.500" stroke="#e8454c" stroke-width="1.200"/></svg>
<div class="sep" style="left:1457.9px;top:61.5px;height:23.5px"></div>
<svg class="ic" style="left:1468.5px;top:55.0px" width="36" height="36" viewBox="0 0 24 24" fill="none" stroke-width="1"><path d="M3 1.5h19" stroke="#3a3a38" stroke-width="1"/><path d="M11.5 6.5h10.5" stroke="#3a3a38" stroke-width="1.2"/><path d="M11.5 11.5h10.5" stroke="#3a3a38" stroke-width="1"/><path d="M11.5 16.5h10.5" stroke="#3a3a38" stroke-width="1.2"/><path d="M3 21.5h19" stroke="#3a3a38" stroke-width="1"/><path d="M1 11.500h7.500M5.500 8.500l3 3-3 3" stroke="#1e8bcd" stroke-width="1.100"/></svg>
<svg class="ic" style="left:1513.5px;top:55.0px" width="36" height="36" viewBox="0 0 24 24" fill="none" stroke-width="1"><path d="M3 1.5h19" stroke="#3a3a38" stroke-width="1"/><path d="M11.5 6.5h10.5" stroke="#3a3a38" stroke-width="1.2"/><path d="M11.5 11.5h10.5" stroke="#3a3a38" stroke-width="1"/><path d="M11.5 16.5h10.5" stroke="#3a3a38" stroke-width="1.2"/><path d="M3 21.5h19" stroke="#3a3a38" stroke-width="1"/><path d="M1.500 11.500h7.500M4.500 8.500l-3 3 3 3" stroke="#1e8bcd" stroke-width="1.100"/></svg>
<div class="sep" style="left:1556.1px;top:61.5px;height:23.5px"></div>
<svg class="ic" style="left:1563.5px;top:55.0px" width="36" height="36" viewBox="0 0 24 24" fill="none" stroke-width="1"><path d="M2.500 4.200h19v17.300h-19z" fill="#fcfcfc"/><path d="M2.500 21.500v-17.300h19v17.300" stroke="#3a3a38" stroke-width="1.300"/><path d="M12 4.200v17.300M2.500 12.800h19" stroke="#797774" stroke-width="0.900"/><path d="M2 21.700h20" stroke="#ed8733" stroke-width="1.200"/></svg>
<svg style="left:1608.7px;top:73.3px" width="10" height="6" viewBox="0 0 10 6"><path d="M0 0h10l-5 5.600z" fill="#000"/></svg>
<svg class="ic" style="left:1625.5px;top:55.0px" width="36" height="36" viewBox="0 0 24 24" fill="none" stroke-width="1"><path d="M3 3.500h18" stroke="#3a3a38" stroke-width="2.600"/><path d="M3 9h18" stroke="#3a3a38" stroke-width="1.700"/><path d="M3 13.500h18" stroke="#3a3a38" stroke-width="0.900" stroke-dasharray="5 1.200"/><path d="M3 17.500h18" stroke="#3a3a38" stroke-width="0.900" stroke-dasharray="2.200 1.200"/><path d="M3 21.500h18" stroke="#3a3a38" stroke-width="2"/></svg>
<svg style="left:1669.5px;top:73.3px" width="10" height="6" viewBox="0 0 10 6"><path d="M0 0h10l-5 5.600z" fill="#000"/></svg>
<svg class="ic" style="left:1686.0px;top:55.0px" width="36" height="36" viewBox="0 0 24 24" fill="none" stroke-width="1"><path d="M2.500 2.500h19v14.500h-19z" fill="#fff" stroke="#1e8bcd" stroke-width="1.200"/><path d="M4.500 4.500h15v10.500h-15z" stroke="#3a3a38" stroke-width="1.300"/><path d="M0 18h24v6h-24z" fill="#2a6099"/></svg>
<svg style="left:1730.5px;top:73.3px" width="10" height="6" viewBox="0 0 10 6"><path d="M0 0h10l-5 5.600z" fill="#000"/></svg>
<div class="sep" style="left:1746.9px;top:61.5px;height:23.5px"></div>
<svg class="ic" style="left:1756.0px;top:55.0px" width="36" height="36" viewBox="0 0 24 24" fill="none" stroke-width="1"><g transform="translate(-0.3,-1.4)"><path d="M2.500 3.500h17v16h-17z" fill="#fcfcfc"/><path d="M6.500 3.500h9v4h-9z" fill="#a6dba0" stroke="#2e9b3e" stroke-width="1.100"/><path d="M6.500 7.500h9v4h-9z" fill="#f9a3a6"/><path d="M6.500 11.500h4v4h-4z" fill="#a6dba0" stroke="#2e9b3e" stroke-width="0.900"/><path d="M6.500 15.500h4v4h-4z" fill="#f9a3a6"/><path d="M6.500 7.500v12M15.500 7.500v4" stroke="#e01b24" stroke-width="1.200"/><path d="M2.500 3.500h17M2.500 3.500v16h8M19.500 3.500v8M2.500 7.500h4M2.500 11.500h4M2.500 15.500h4M15.500 7.500h4" stroke="#3a3a38" stroke-width="1.100"/></g><path d="M11.200 11.700h10.800v11h-10.800z" fill="#fcfcfc" stroke="#3a3a38" stroke-width="1.100"/><path d="M13.300 15.700h6.600M13.300 18.900h6.600M18.300 13.300l-3.300 8" stroke="#3a3a38" stroke-width="1.100"/></svg>
<svg style="left:1799.5px;top:73.3px" width="10" height="6" viewBox="0 0 10 6"><path d="M0 0h10l-5 5.600z" fill="#000"/></svg>
</div>
<div id="formulabar">
<div class="box" style="left:5.800px;top:4px;width:215.200px;height:30.500px"></div>
<div class="t" id="nb" style="letter-spacing:-1.841px;left:9.800px;top:9.500px">B1</div>
<div class="dd" style="left:195.500px;top:4.500px;width:25px;height:29px"></div>
<svg style="left:201px;top:14px" width="14" height="9" viewBox="0 0 14 9" fill="none" stroke="#444" stroke-width="1.200"><path d="M1.500 1.500l5.500 5.500 5.500-5.500"/></svg>
<div class="sep" style="left:225px;top:10px;height:21px"></div>
<svg style="left:233px;top:5px" width="28" height="28" viewBox="0 0 28 28"><text x="2.500" y="21.500" font-size="23.500" style="font-family:'Liberation Serif',serif;font-style:italic" fill="#1e8bcd" textLength="24" lengthAdjust="spacingAndGlyphs">fx</text></svg>
<svg style="left:267px;top:5px" width="24" height="28" viewBox="0 0 24 28" fill="none" stroke="#2e2e2e" stroke-width="1.700"><path d="M19.500 7.500v-4h-16.500l8.500 10.500-8.500 10.500h16.500v-4"/></svg>
<svg style="left:298px;top:19px" width="11" height="6" viewBox="0 0 11 6"><path d="M0 0h11l-5.500 6z" fill="#111"/></svg>
<div style="left:320px;top:13px;width:18px;height:3px;background:#2e2e2e"></div><div style="left:320px;top:22px;width:18px;height:3px;background:#2e2e2e"></div>
<div style="left:345px;top:4px;width:2040px;height:31px;background:#fff;border:1px solid #a7a7a7"></div>
<svg style="left:2391px;top:15px" width="16" height="9" viewBox="0 0 16 9"><path d="M0 0h16l-8 8.500z" fill="#000"/></svg>
</div>
<div id="sheet" style="left:0;top:220.500px;width:2427px;height:882px;background:#f0f0f0">
</div>
<svg id="grid" style="left:0;top:0" width="2427" height="1239" viewBox="0 0 2427 1239">
<defs><clipPath id="gc"><rect x="0" y="220" width="2391" height="882"/></clipPath><clipPath id="hc"><rect x="1890" y="377" width="101" height="42"/></clipPath></defs>
<g clip-path="url(#gc)">
<rect x="47" y="246.500" width="2344" height="855.5" fill="#fff"/>
<rect x="46.500" y="220.500" width="2344.5" height="26" fill="#dddddd"/>
<rect x="2.500" y="246.500" width="44" height="855.5" fill="#dddddd"/>
<rect x="2.500" y="220.500" width="44" height="26" fill="#f0f0f0"/>
<rect x="46.500" y="220" width="2344.5" height="1" fill="#b5b5b5"/>
<rect x="46.500" y="245.700" width="2344.5" height="1" fill="#b0b0b0"/>
<rect x="46" y="220.500" width="1" height="881.5" fill="#b5b5b5"/>
<rect x="166.5" y="220.500" width="64.3" height="25.700" fill="#0078d7"/>
<rect x="2.500" y="247" width="43.500" height="29.500" fill="#0078d7"/>
<text x="107.1" y="240.200" font-size="17.600" fill="#1a1a1a" text-anchor="middle">A</text>
<rect x="166.2" y="221" width="1" height="25" fill="#b9b9b9"/>
<text x="198.6" y="240.200" font-size="17.600" font-weight="700" fill="#fff" text-anchor="middle">B</text>
<rect x="230.1" y="221" width="1" height="25" fill="#b9b9b9"/>
<text x="545.0" y="240.200" font-size="17.600" fill="#1a1a1a" text-anchor="middle">C</text>
<rect x="858.9" y="221" width="1" height="25" fill="#b9b9b9"/>
<text x="1174.0" y="240.200" font-size="17.600" fill="#1a1a1a" text-anchor="middle">D</text>
<rect x="1488.2" y="221" width="1" height="25" fill="#b9b9b9"/>
<text x="1535.8" y="240.200" font-size="17.600" fill="#1a1a1a" text-anchor="middle">E</text>
<rect x="1582.5" y="221" width="1" height="25" fill="#b9b9b9"/>
<text x="1671.8" y="240.200" font-size="17.600" fill="#1a1a1a" text-anchor="middle">F</text>
<rect x="1760.2" y="221" width="1" height="25" fill="#b9b9b9"/>
<text x="1825.6" y="240.200" font-size="17.600" fill="#1a1a1a" text-anchor="middle">G</text>
<rect x="1890.0" y="221" width="1" height="25" fill="#b9b9b9"/>
<text x="1954.0" y="240.200" font-size="17.600" fill="#1a1a1a" text-anchor="middle">H</text>
<rect x="2016.9" y="221" width="1" height="25" fill="#b9b9b9"/>
<text x="2108.9" y="240.200" font-size="17.600" fill="#1a1a1a" text-anchor="middle">I</text>
<rect x="2200.0" y="221" width="1" height="25" fill="#b9b9b9"/>
<text x="2320.0" y="240.200" font-size="17.600" fill="#1a1a1a" text-anchor="middle">J</text>
<text x="24.300" y="269.1" font-size="17.600" font-weight="700" fill="#fff" text-anchor="middle">1</text>
<rect x="2.500" y="276.0" width="44" height="1" fill="#b9b9b9"/>
<text x="24.300" y="298.8" font-size="17.600" fill="#1a1a1a" text-anchor="middle">2</text>
<rect x="2.500" y="305.8" width="44" height="1" fill="#b9b9b9"/>
<text x="24.300" y="328.9" font-size="17.600" fill="#1a1a1a" text-anchor="middle">3</text>
<rect x="2.500" y="336.3" width="44" height="1" fill="#b9b9b9"/>
<text x="24.300" y="363.4" font-size="17.600" fill="#1a1a1a" text-anchor="middle">4</text>
<rect x="2.500" y="374.8" width="44" height="1" fill="#b9b9b9"/>
<text x="24.300" y="404.8" font-size="17.600" fill="#1a1a1a" text-anchor="middle">5</text>
<rect x="2.500" y="418.9" width="44" height="1" fill="#b9b9b9"/>
<text x="24.300" y="441.8" font-size="17.600" fill="#1a1a1a" text-anchor="middle">6</text>
<rect x="2.500" y="448.9" width="44" height="1" fill="#b9b9b9"/>
<text x="24.300" y="471.8" font-size="17.600" fill="#1a1a1a" text-anchor="middle">7</text>
<rect x="2.500" y="478.9" width="44" height="1" fill="#b9b9b9"/>
<text x="24.300" y="501.8" font-size="17.600" fill="#1a1a1a" text-anchor="middle">8</text>
<rect x="2.500" y="508.9" width="44" height="1" fill="#b9b9b9"/>
<text x="24.300" y="531.8" font-size="17.600" fill="#1a1a1a" text-anchor="middle">9</text>
<rect x="2.500" y="538.9" width="44" height="1" fill="#b9b9b9"/>
<text x="24.300" y="561.8" font-size="17.600" fill="#1a1a1a" text-anchor="middle">10</text>
<rect x="2.500" y="568.9" width="44" height="1" fill="#b9b9b9"/>
<text x="24.300" y="591.8" font-size="17.600" fill="#1a1a1a" text-anchor="middle">11</text>
<rect x="2.500" y="598.9" width="44" height="1" fill="#b9b9b9"/>
<text x="24.300" y="621.8" font-size="17.600" fill="#1a1a1a" text-anchor="middle">12</text>
<rect x="2.500" y="628.9" width="44" height="1" fill="#b9b9b9"/>
<text x="24.300" y="651.8" font-size="17.600" fill="#1a1a1a" text-anchor="middle">13</text>
<rect x="2.500" y="658.9" width="44" height="1" fill="#b9b9b9"/>
<text x="24.300" y="681.8" font-size="17.600" fill="#1a1a1a" text-anchor="middle">14</text>
<rect x="2.500" y="688.9" width="44" height="1" fill="#b9b9b9"/>
<text x="24.300" y="733.2" font-size="17.600" fill="#1a1a1a" text-anchor="middle">15</text>
<rect x="2.500" y="761.8" width="44" height="1" fill="#b9b9b9"/>
<text x="24.300" y="806.1" font-size="17.600" fill="#1a1a1a" text-anchor="middle">16</text>
<rect x="2.500" y="834.7" width="44" height="1" fill="#b9b9b9"/>
<text x="24.300" y="857.6" font-size="17.600" fill="#1a1a1a" text-anchor="middle">17</text>
<rect x="2.500" y="864.8" width="44" height="1" fill="#b9b9b9"/>
<text x="24.300" y="887.7" font-size="17.600" fill="#1a1a1a" text-anchor="middle">18</text>
<rect x="2.500" y="894.8" width="44" height="1" fill="#b9b9b9"/>
<text x="24.300" y="939.2" font-size="17.600" fill="#1a1a1a" text-anchor="middle">19</text>
<rect x="2.500" y="967.8" width="44" height="1" fill="#b9b9b9"/>
<text x="24.300" y="1012.2" font-size="17.600" fill="#1a1a1a" text-anchor="middle">20</text>
<rect x="2.500" y="1040.8" width="44" height="1" fill="#b9b9b9"/>
<text x="24.300" y="1085.3" font-size="17.600" fill="#1a1a1a" text-anchor="middle">21</text>
<rect x="858.9" y="247" width="1" height="28" fill="#d4d4d4"/>
<rect x="1488.2" y="247" width="1" height="28" fill="#d4d4d4"/>
<rect x="1582.5" y="247" width="1" height="28" fill="#d4d4d4"/>
<rect x="1760.2" y="247" width="1" height="28" fill="#d4d4d4"/>
<rect x="1890.0" y="247" width="1" height="28" fill="#d4d4d4"/>
<rect x="2016.9" y="247" width="1" height="28" fill="#d4d4d4"/>
<rect x="2200.0" y="247" width="1" height="28" fill="#d4d4d4"/>
<rect x="47" y="276" width="2344" height="99" fill="#122c58"/>
<rect x="47" y="376" width="2344" height="43" fill="#dac0a3"/>
<rect x="46.800" y="274.95" width="2344.2" height="2.900" fill="#000"/>
<rect x="46.800" y="373.85" width="2344.2" height="2.900" fill="#000"/>
<rect x="46.800" y="418.05" width="2344.2" height="2.900" fill="#000"/>
<rect x="46.900" y="275" width="1.500" height="827" fill="#000"/>
<rect x="47" y="448.65" width="2344" height="1.500" fill="#000"/>
<rect x="47" y="478.65" width="2344" height="1.500" fill="#000"/>
<rect x="47" y="508.65" width="2344" height="1.500" fill="#000"/>
<rect x="47" y="538.65" width="2344" height="1.500" fill="#000"/>
<rect x="47" y="568.65" width="2344" height="1.500" fill="#000"/>
<rect x="47" y="598.65" width="2344" height="1.500" fill="#000"/>
<rect x="47" y="628.65" width="2344" height="1.500" fill="#000"/>
<rect x="47" y="658.65" width="2344" height="1.500" fill="#000"/>
<rect x="47" y="688.65" width="2344" height="1.500" fill="#000"/>
<rect x="47" y="761.55" width="2344" height="1.500" fill="#000"/>
<rect x="47" y="834.45" width="2344" height="1.500" fill="#000"/>
<rect x="47" y="864.55" width="2344" height="1.500" fill="#000"/>
<rect x="47" y="894.55" width="2344" height="1.500" fill="#000"/>
<rect x="47" y="967.55" width="2344" height="1.500" fill="#000"/>
<rect x="47" y="1040.55" width="2344" height="1.500" fill="#000"/>
<rect x="165.95" y="376" width="1.500" height="726" fill="#000"/>
<rect x="229.85" y="376" width="1.500" height="726" fill="#000"/>
<rect x="858.65" y="376" width="1.500" height="726" fill="#000"/>
<rect x="1487.95" y="376" width="1.500" height="726" fill="#000"/>
<rect x="1582.25" y="376" width="1.500" height="726" fill="#000"/>
<rect x="1759.95" y="376" width="1.500" height="726" fill="#000"/>
<rect x="1889.75" y="376" width="1.500" height="726" fill="#000"/>
<rect x="2016.65" y="376" width="1.500" height="726" fill="#000"/>
<rect x="2199.75" y="376" width="1.500" height="726" fill="#000"/>
<rect x="139.3" y="392" width="26.600" height="26" fill="#000"/><rect x="140.3" y="393" width="24.800" height="25" fill="#fff"/><rect x="141.3" y="394" width="23" height="24" fill="#f0f0f0"/><path d="M146.6 402.700h12.400l-6.200 6.400z" fill="#000"/>
<rect x="203.2" y="392" width="26.600" height="26" fill="#000"/><rect x="204.2" y="393" width="24.800" height="25" fill="#fff"/><rect x="205.2" y="394" width="23" height="24" fill="#f0f0f0"/><path d="M210.5 402.700h12.400l-6.200 6.400z" fill="#000"/>
<rect x="832.0" y="392" width="26.600" height="26" fill="#000"/><rect x="833.0" y="393" width="24.800" height="25" fill="#fff"/><rect x="834.0" y="394" width="23" height="24" fill="#f0f0f0"/><path d="M839.3 402.700h12.400l-6.200 6.400z" fill="#000"/>
<rect x="1461.3" y="392" width="26.600" height="26" fill="#000"/><rect x="1462.3" y="393" width="24.800" height="25" fill="#fff"/><rect x="1463.3" y="394" width="23" height="24" fill="#f0f0f0"/><path d="M1468.6 402.700h12.400l-6.200 6.400z" fill="#000"/>
<rect x="1555.6" y="392" width="26.600" height="26" fill="#000"/><rect x="1556.6" y="393" width="24.800" height="25" fill="#fff"/><rect x="1557.6" y="394" width="23" height="24" fill="#f0f0f0"/><path d="M1562.9 402.700h12.400l-6.200 6.400z" fill="#000"/>
<rect x="1733.3" y="392" width="26.600" height="26" fill="#000"/><rect x="1734.3" y="393" width="24.800" height="25" fill="#fff"/><rect x="1735.3" y="394" width="23" height="24" fill="#f0f0f0"/><path d="M1740.6 402.700h12.400l-6.200 6.400z" fill="#000"/>
<rect x="1863.1" y="392" width="26.600" height="26" fill="#000"/><rect x="1864.1" y="393" width="24.800" height="25" fill="#fff"/><rect x="1865.1" y="394" width="23" height="24" fill="#f0f0f0"/><path d="M1870.4 402.700h12.400l-6.200 6.400z" fill="#000"/>
<rect x="1990.0" y="392" width="26.600" height="26" fill="#000"/><rect x="1991.0" y="393" width="24.800" height="25" fill="#fff"/><rect x="1992.0" y="394" width="23" height="24" fill="#f0f0f0"/><path d="M1997.3 402.700h12.400l-6.200 6.400z" fill="#000"/>
<rect x="2173.1" y="392" width="26.600" height="26" fill="#000"/><rect x="2174.1" y="393" width="24.800" height="25" fill="#fff"/><rect x="2175.1" y="394" width="23" height="24" fill="#f0f0f0"/><path d="M2180.4 402.700h12.400l-6.200 6.400z" fill="#000"/>
<text x="1075.0" y="320.8" font-size="49.62" font-weight="700" fill="#fffaf5" textLength="807.0" lengthAdjust="spacingAndGlyphs">REGRAS TRIBUTAÇÃO - PRODUTOS</text>
<text x="1150.1" y="363.4" font-size="28.35" font-weight="700" fill="#fff" textLength="654.6" lengthAdjust="spacingAndGlyphs">Reforma Tributária - Lei Complementar 214/2025</text>
<text x="74.8" y="403.3" font-size="19.49" font-weight="700" fill="#000" textLength="45.4" lengthAdjust="spacingAndGlyphs">NCM</text>
<text x="177.6" y="403.3" font-size="19.49" font-weight="700" fill="#000" textLength="22.9" lengthAdjust="spacingAndGlyphs">EX</text>
<text x="399.3" y="403.3" font-size="19.49" font-weight="700" fill="#000" textLength="270.3" lengthAdjust="spacingAndGlyphs">Descrição Produto Tabela TIPI</text>
<text x="1047.7" y="403.3" font-size="19.49" font-weight="700" fill="#000" textLength="233.7" lengthAdjust="spacingAndGlyphs">Descrição na LC 214/2025</text>
<text x="1509.1" y="403.3" font-size="19.49" font-weight="700" fill="#000" textLength="32.7" lengthAdjust="spacingAndGlyphs">CST</text>
<text x="1617.8" y="403.3" font-size="19.49" font-weight="700" fill="#000" textLength="89.5" lengthAdjust="spacingAndGlyphs">cClassTrib</text>
<g clip-path="url(#hc)"><text x="1897.0" y="403.3" font-size="19.49" font-weight="700" fill="#000" textLength="94.7" lengthAdjust="spacingAndGlyphs">Base Legal</text></g>
<text x="2039.3" y="403.3" font-size="19.49" font-weight="700" fill="#000" textLength="121.4" lengthAdjust="spacingAndGlyphs">Anexo LC 214</text>
<text x="2288.9" y="403.3" font-size="19.49" font-weight="700" fill="#000" textLength="42.2" lengthAdjust="spacingAndGlyphs">Item</text>
<text x="1781.3" y="393.5" font-size="17.72" font-weight="700" fill="#000" textLength="71.4" lengthAdjust="spacingAndGlyphs">Redução</text>
<text x="1779.6" y="413.2" font-size="17.72" font-weight="700" fill="#000" textLength="74.8" lengthAdjust="spacingAndGlyphs">Aplicável</text>
<path d="M76.0 409.5L78.2 406.9L80.4 409.5L82.6 406.9L84.8 409.5L87.0 406.9L89.2 409.5L91.4 406.9L93.6 409.5L95.8 406.9L98.0 409.5L100.2 406.9L102.4 409.5L104.6 406.9L106.8 409.5L109.0 406.9L111.2 409.5L113.4 406.9L115.6 409.5L117.8 406.9L120.0 409.5" fill="none" stroke="#e8392b" stroke-width="1"/>
<path d="M1509.0 409.5L1511.2 406.9L1513.4 409.5L1515.6 406.9L1517.8 409.5L1520.0 406.9L1522.2 409.5L1524.4 406.9L1526.6 409.5L1528.8 406.9L1531.0 409.5L1533.2 406.9L1535.4 409.5L1537.6 406.9L1539.8 409.5L1542.0 406.9L1544.2 409.5" fill="none" stroke="#e8392b" stroke-width="1"/>
<path d="M1618.0 409.5L1620.2 406.9L1622.4 409.5L1624.6 406.9L1626.8 409.5L1629.0 406.9L1631.2 409.5L1633.4 406.9L1635.6 409.5L1637.8 406.9L1640.0 409.5L1642.2 406.9L1644.4 409.5L1646.6 406.9L1648.8 409.5L1651.0 406.9L1653.2 409.5L1655.4 406.9L1657.6 409.5L1659.8 406.9L1662.0 409.5L1664.2 406.9L1666.4 409.5L1668.6 406.9L1670.8 409.5L1673.0 406.9L1675.2 409.5L1677.4 406.9L1679.6 409.5L1681.8 406.9L1684.0 409.5L1686.2 406.9L1688.4 409.5L1690.6 406.9L1692.8 409.5L1695.0 406.9L1697.2 409.5L1699.4 406.9L1701.6 409.5L1703.8 406.9L1706.0 409.5L1708.2 406.9" fill="none" stroke="#e8392b" stroke-width="1"/>
<text x="48.3" y="440.1" font-size="19.49" font-weight="700" fill="#000" textLength="50.5" lengthAdjust="spacingAndGlyphs">01.01</text>
<text x="232.0" y="440.1" font-size="19.49" font-weight="700" fill="#000" textLength="306.6" lengthAdjust="spacingAndGlyphs">Cavalos, asininos e muares, vivos.</text>
<text x="48.3" y="470.1" font-size="19.49" fill="#000" textLength="61.3" lengthAdjust="spacingAndGlyphs">0101.2</text>
<text x="232.0" y="470.1" font-size="19.49" fill="#000" textLength="84.9" lengthAdjust="spacingAndGlyphs">- Cavalos:</text>
<text x="48.3" y="500.1" font-size="19.49" fill="#000" textLength="100.3" lengthAdjust="spacingAndGlyphs">0101.21.00</text>
<text x="232.0" y="500.1" font-size="19.49" fill="#000" textLength="256.0" lengthAdjust="spacingAndGlyphs">-- Reprodutores de raça pura</text>
<text x="48.3" y="530.1" font-size="19.49" fill="#000" textLength="100.3" lengthAdjust="spacingAndGlyphs">0101.29.00</text>
<text x="232.0" y="530.1" font-size="19.49" fill="#000" textLength="79.5" lengthAdjust="spacingAndGlyphs">-- Outros</text>
<text x="48.3" y="560.1" font-size="19.49" fill="#000" textLength="100.3" lengthAdjust="spacingAndGlyphs">0101.30.00</text>
<text x="232.0" y="560.1" font-size="19.49" fill="#000" textLength="86.5" lengthAdjust="spacingAndGlyphs">- Asininos</text>
<text x="48.3" y="590.1" font-size="19.49" fill="#000" textLength="100.3" lengthAdjust="spacingAndGlyphs">0101.90.00</text>
<text x="232.0" y="590.1" font-size="19.49" fill="#000" textLength="72.7" lengthAdjust="spacingAndGlyphs">- Outros</text>
<text x="48.3" y="620.1" font-size="19.49" font-weight="700" fill="#000" textLength="50.5" lengthAdjust="spacingAndGlyphs">01.02</text>
<text x="232.0" y="620.1" font-size="19.49" font-weight="700" fill="#000" textLength="299.0" lengthAdjust="spacingAndGlyphs">Animais vivos da espécie bovina.</text>
<text x="48.3" y="650.1" font-size="19.49" fill="#000" textLength="61.3" lengthAdjust="spacingAndGlyphs">0102.2</text>
<text x="232.0" y="650.1" font-size="19.49" fill="#000" textLength="194.4" lengthAdjust="spacingAndGlyphs">- Bovinos domésticos:</text>
<text x="48.3" y="680.1" font-size="19.49" fill="#000" textLength="72.5" lengthAdjust="spacingAndGlyphs">0102.21</text>
<text x="232.0" y="680.1" font-size="19.49" fill="#000" textLength="256.0" lengthAdjust="spacingAndGlyphs">-- Reprodutores de raça pura</text>
<text x="48.3" y="732.1" font-size="19.49" fill="#000" textLength="100.3" lengthAdjust="spacingAndGlyphs">0102.21.10</text>
<text x="232.0" y="732.1" font-size="19.49" fill="#000" textLength="235.9" lengthAdjust="spacingAndGlyphs">Prenhes ou com cria ao pé</text>
<text x="861.6" y="708.7" font-size="19.49" fill="#000" textLength="590.0" lengthAdjust="spacingAndGlyphs">Reprodutores de raça pura, inclusive matrizes de animais puros de</text>
<text x="861.6" y="731.5" font-size="19.49" fill="#000" textLength="528.2" lengthAdjust="spacingAndGlyphs">origem com registro genealógico; em conformidade com as</text>
<text x="861.6" y="754.4" font-size="19.49" fill="#000" textLength="480.1" lengthAdjust="spacingAndGlyphs">definições e demais requisitos da legislação específica</text>
<text x="1519.1" y="732.1" font-size="19.49" fill="#000" textLength="33.5" lengthAdjust="spacingAndGlyphs">200</text>
<text x="1638.4" y="732.1" font-size="19.49" fill="#000" textLength="66.9" lengthAdjust="spacingAndGlyphs">200038</text>
<text x="1806.6" y="732.1" font-size="19.49" fill="#000" textLength="38.0" lengthAdjust="spacingAndGlyphs">60%</text>
<text x="1918.1" y="732.1" font-size="19.49" fill="#000" textLength="71.8" lengthAdjust="spacingAndGlyphs">Art. 138</text>
<text x="2070.3" y="732.1" font-size="19.49" fill="#000" textLength="77.4" lengthAdjust="spacingAndGlyphs">Anexo IX</text>
<text x="2308.8" y="732.1" font-size="19.49" fill="#000" textLength="22.3" lengthAdjust="spacingAndGlyphs">15</text>
<text x="48.3" y="805.0" font-size="19.49" fill="#000" textLength="100.3" lengthAdjust="spacingAndGlyphs">0102.21.90</text>
<text x="232.0" y="805.0" font-size="19.49" fill="#000" textLength="61.0" lengthAdjust="spacingAndGlyphs">Outros</text>
<text x="861.6" y="781.6" font-size="19.49" fill="#000" textLength="590.0" lengthAdjust="spacingAndGlyphs">Reprodutores de raça pura, inclusive matrizes de animais puros de</text>
<text x="861.6" y="804.4" font-size="19.49" fill="#000" textLength="528.2" lengthAdjust="spacingAndGlyphs">origem com registro genealógico; em conformidade com as</text>
<text x="861.6" y="827.3" font-size="19.49" fill="#000" textLength="480.1" lengthAdjust="spacingAndGlyphs">definições e demais requisitos da legislação específica</text>
<text x="1519.1" y="805.0" font-size="19.49" fill="#000" textLength="33.5" lengthAdjust="spacingAndGlyphs">200</text>
<text x="1638.4" y="805.0" font-size="19.49" fill="#000" textLength="66.9" lengthAdjust="spacingAndGlyphs">200038</text>
<text x="1806.6" y="805.0" font-size="19.49" fill="#000" textLength="38.0" lengthAdjust="spacingAndGlyphs">60%</text>
<text x="1918.1" y="805.0" font-size="19.49" fill="#000" textLength="71.8" lengthAdjust="spacingAndGlyphs">Art. 138</text>
<text x="2070.3" y="805.0" font-size="19.49" fill="#000" textLength="77.4" lengthAdjust="spacingAndGlyphs">Anexo IX</text>
<text x="2308.8" y="805.0" font-size="19.49" fill="#000" textLength="22.3" lengthAdjust="spacingAndGlyphs">15</text>
<text x="48.3" y="855.9" font-size="19.49" fill="#000" textLength="72.5" lengthAdjust="spacingAndGlyphs">0102.29</text>
<text x="232.0" y="855.9" font-size="19.49" fill="#000" textLength="79.5" lengthAdjust="spacingAndGlyphs">-- Outros</text>
<text x="48.3" y="886.0" font-size="19.49" fill="#000" textLength="89.2" lengthAdjust="spacingAndGlyphs">0102.29.1</text>
<text x="232.0" y="886.0" font-size="19.49" fill="#000" textLength="147.3" lengthAdjust="spacingAndGlyphs">Para reprodução</text>
<text x="48.3" y="938.0" font-size="19.49" fill="#000" textLength="100.3" lengthAdjust="spacingAndGlyphs">0102.29.11</text>
<text x="232.0" y="938.0" font-size="19.49" fill="#000" textLength="235.9" lengthAdjust="spacingAndGlyphs">Prenhes ou com cria ao pé</text>
<text x="861.6" y="914.6" font-size="19.49" fill="#000" textLength="590.0" lengthAdjust="spacingAndGlyphs">Reprodutores de raça pura, inclusive matrizes de animais puros de</text>
<text x="861.6" y="937.4" font-size="19.49" fill="#000" textLength="528.2" lengthAdjust="spacingAndGlyphs">origem com registro genealógico; em conformidade com as</text>
<text x="861.6" y="960.3" font-size="19.49" fill="#000" textLength="480.1" lengthAdjust="spacingAndGlyphs">definições e demais requisitos da legislação específica</text>
<text x="1519.1" y="938.0" font-size="19.49" fill="#000" textLength="33.5" lengthAdjust="spacingAndGlyphs">200</text>
<text x="1638.4" y="938.0" font-size="19.49" fill="#000" textLength="66.9" lengthAdjust="spacingAndGlyphs">200038</text>
<text x="1806.6" y="938.0" font-size="19.49" fill="#000" textLength="38.0" lengthAdjust="spacingAndGlyphs">60%</text>
<text x="1918.1" y="938.0" font-size="19.49" fill="#000" textLength="71.8" lengthAdjust="spacingAndGlyphs">Art. 138</text>
<text x="2070.3" y="938.0" font-size="19.49" fill="#000" textLength="77.4" lengthAdjust="spacingAndGlyphs">Anexo IX</text>
<text x="2308.8" y="938.0" font-size="19.49" fill="#000" textLength="22.3" lengthAdjust="spacingAndGlyphs">15</text>
<text x="48.3" y="1011.0" font-size="19.49" fill="#000" textLength="100.3" lengthAdjust="spacingAndGlyphs">0102.29.19</text>
<text x="232.0" y="1011.0" font-size="19.49" fill="#000" textLength="61.0" lengthAdjust="spacingAndGlyphs">Outros</text>
<text x="861.6" y="987.6" font-size="19.49" fill="#000" textLength="590.0" lengthAdjust="spacingAndGlyphs">Reprodutores de raça pura, inclusive matrizes de animais puros de</text>
<text x="861.6" y="1010.4" font-size="19.49" fill="#000" textLength="528.2" lengthAdjust="spacingAndGlyphs">origem com registro genealógico; em conformidade com as</text>
<text x="861.6" y="1033.3" font-size="19.49" fill="#000" textLength="480.1" lengthAdjust="spacingAndGlyphs">definições e demais requisitos da legislação específica</text>
<text x="1519.1" y="1011.0" font-size="19.49" fill="#000" textLength="33.5" lengthAdjust="spacingAndGlyphs">200</text>
<text x="1638.4" y="1011.0" font-size="19.49" fill="#000" textLength="66.9" lengthAdjust="spacingAndGlyphs">200038</text>
<text x="1806.6" y="1011.0" font-size="19.49" fill="#000" textLength="38.0" lengthAdjust="spacingAndGlyphs">60%</text>
<text x="1918.1" y="1011.0" font-size="19.49" fill="#000" textLength="71.8" lengthAdjust="spacingAndGlyphs">Art. 138</text>
<text x="2070.3" y="1011.0" font-size="19.49" fill="#000" textLength="77.4" lengthAdjust="spacingAndGlyphs">Anexo IX</text>
<text x="2308.8" y="1011.0" font-size="19.49" fill="#000" textLength="22.3" lengthAdjust="spacingAndGlyphs">15</text>
<text x="48.3" y="1084.0" font-size="19.49" fill="#000" textLength="100.3" lengthAdjust="spacingAndGlyphs">0102.29.90</text>
<text x="232.0" y="1084.0" font-size="19.49" fill="#000" textLength="61.0" lengthAdjust="spacingAndGlyphs">Outros</text>
<text x="861.6" y="1060.6" font-size="19.49" fill="#000" textLength="590.0" lengthAdjust="spacingAndGlyphs">Reprodutores de raça pura, inclusive matrizes de animais puros de</text>
<text x="861.6" y="1083.4" font-size="19.49" fill="#000" textLength="528.2" lengthAdjust="spacingAndGlyphs">origem com registro genealógico; em conformidade com as</text>
<text x="861.6" y="1106.3" font-size="19.49" fill="#000" textLength="480.1" lengthAdjust="spacingAndGlyphs">definições e demais requisitos da legislação específica</text>
<text x="1519.1" y="1084.0" font-size="19.49" fill="#000" textLength="33.5" lengthAdjust="spacingAndGlyphs">200</text>
<text x="1638.4" y="1084.0" font-size="19.49" fill="#000" textLength="66.9" lengthAdjust="spacingAndGlyphs">200038</text>
<text x="1806.6" y="1084.0" font-size="19.49" fill="#000" textLength="38.0" lengthAdjust="spacingAndGlyphs">60%</text>
<text x="1918.1" y="1084.0" font-size="19.49" fill="#000" textLength="71.8" lengthAdjust="spacingAndGlyphs">Art. 138</text>
<text x="2070.3" y="1084.0" font-size="19.49" fill="#000" textLength="77.4" lengthAdjust="spacingAndGlyphs">Anexo IX</text>
<text x="2308.8" y="1084.0" font-size="19.49" fill="#000" textLength="22.3" lengthAdjust="spacingAndGlyphs">15</text>
<rect x="166.1" y="246.600" width="64.7" height="30" fill="none" stroke="#0f73d9" stroke-width="1.800"/>
<rect x="227.0" y="272.800" width="7.600" height="7.600" fill="#0f73d9" stroke="#fff" stroke-width="1"/>
</g>
<rect x="2391" y="220.500" width="27" height="882" fill="#f0f0f0"/>
<rect x="2391" y="220.500" width="26.500" height="6" fill="#a3a3a3"/><rect x="2397" y="223" width="14" height="1.200" fill="#222"/>
<rect x="2401.800" y="253" width="5.600" height="16" rx="2.800" fill="#8c8c8c"/>
<rect x="2417.500" y="177" width="1.200" height="980" fill="#b4b4b4"/>
<rect x="2418.500" y="630" width="6.500" height="73.500" fill="#6f6f6f"/><path d="M2423.600 660.500v12l-5-6z" fill="#fff"/>
</svg>
<div id="hscroll" style="left:0;top:1102px;width:2427px;height:20px;background:#f0f0f0"><div style="left:27px;top:10.700px;width:1048px;height:5.600px;border-radius:3px;background:#8a8a8a"></div></div>
<div id="tabbar" style="left:0;top:1122px;width:2427px;height:35px;background:#f0f0f0;border-bottom:1px solid #bdbdbd">
<svg style="left:14px;top:9px" width="100" height="22" viewBox="0 0 100 22" fill="#9d9d9d"><rect x="2.500" y="1.500" width="1.400" height="17.500"/><path d="M13.500 1.800v17l-9-8.500z"/><path d="M40.200 1.800v17l-9-8.500z"/><path d="M58 1.800v17l9.200-8.500z"/><path d="M84.500 1.800v17l9.300-8.500z"/><rect x="94.500" y="1.500" width="1.400" height="17.500"/></svg>
<svg style="left:130px;top:10px" width="20" height="20" viewBox="0 0 20 20" fill="#000"><rect x="7.300" y="0" width="5.200" height="19"/><rect x="0" y="7" width="19.500" height="5.200"/></svg>
<div style="left:160px;top:6px;width:134px;height:28.500px;background:#fff;border-bottom:3px solid #7a7a7a"></div>
<svg style="left:0;top:0" width="400" height="35" viewBox="0 1122 400 35"><text x="178.800" y="1147.700" font-size="16.800" font-weight="700" textLength="96.200" lengthAdjust="spacingAndGlyphs">PRODUTOS</text></svg>
</div>
<div id="hsplit" style="left:2384.500px;top:1102px;width:6.500px;height:25.500px;background:#a3a3a3"></div><div style="left:2387.200px;top:1106px;width:1.300px;height:17.500px;background:#222"></div>
<div style="left:2417.500px;top:1102px;width:1.200px;height:54.500px;background:#b4b4b4"></div>
<div id="findbar" style="left:0;top:1157px;width:2427px;height:50.500px;background:#f0f0f0;border-bottom:1px solid #c6c6c6">
<svg style="left:16px;top:10.500px" width="28" height="28" viewBox="0 0 28 28"><circle cx="14" cy="14" r="13" fill="#f4868b" stroke="#e8454c" stroke-width="1.200"/><path d="M8 8l12 12M20 8l-12 12" stroke="#fff" stroke-width="3.400"/></svg>
<div class="box" style="left:51.300px;top:8.500px;width:248.200px;height:31.500px"></div>
<div class="t" id="f0" style="letter-spacing:-0.323px;left:54.400px;top:14px;color:#8f8f8f">Localizar</div>
<div class="dd" style="left:274.500px;top:9px;width:25px;height:29.500px"></div>
<svg style="left:280px;top:19px" width="14" height="9" viewBox="0 0 14 9" fill="none" stroke="#444" stroke-width="1.200"><path d="M1.500 1.500l5.500 5.500 5.500-5.500"/></svg>
<svg style="left:309px;top:16px" width="80" height="18" viewBox="0 0 80 18" fill="none" stroke="#b5b5b5" stroke-width="1.500"><path d="M1.500 15.500l14-14 14 14z"/><path d="M46 2l14.500 14 14.500-14z"/></svg>
<div class="t" id="f1" style="letter-spacing:0.068px;left:394px;top:14px;color:#9a9a9a">Localizar todos</div>
<div style="left:520.800px;top:14.500px;width:19px;height:19px;background:#fff;border:1.300px solid #333;border-radius:3.500px"></div>
<div class="t" id="f2" style="letter-spacing:0.118px;left:545px;top:14px">Exibição formatada</div>
<div style="left:700px;top:14.500px;width:19px;height:19px;background:#fff;border:1.300px solid #333;border-radius:3.500px"></div>
<div class="t" id="f3" style="letter-spacing:-0.025px;left:724px;top:14px">Diferenciar maiúsculas de minúsculas</div>
<div class="sep" style="left:1022px;top:12px;height:24px"></div><div class="sep" style="left:1075px;top:12px;height:24px"></div>
<svg style="left:1033px;top:8px" width="36" height="36" viewBox="0 0 24 24"><circle cx="14" cy="8.600" r="6.400" fill="#fdfdfd" stroke="#4f4f4d" stroke-width="0.900"/><path d="M8.300 14.700l-6.600 6.900" stroke="#3a3a38" stroke-width="1.800"/><text x="10.600" y="13.200" font-size="12.500" font-weight="700" fill="#1e8bcd">a</text><text x="15.200" y="21.800" font-size="13" fill="#3a3a38">d</text></svg>
</div>
<div id="statusbar" style="left:0;top:1207.500px;width:2427px;height:31.500px;background:#f0f0f0">
<svg style="left:13px;top:2.500px" width="24" height="24" viewBox="0 0 24 24" fill="none" stroke="#8d8d8d" stroke-width="1.200"><path d="M1 1h22v22h-19l-3-3z"/><path d="M5 1v8h14v-8M6.500 23v-8h11v8M9.500 17.500v5.500"/></svg>
<div class="sep" style="left:43.5px;top:3px;height:23px;background:#c4c4c4"></div>
<div class="sep" style="left:401.5px;top:3px;height:23px;background:#c4c4c4"></div>
<div class="sep" style="left:732.5px;top:3px;height:23px;background:#c4c4c4"></div>
<div class="sep" style="left:1152px;top:3px;height:23px;background:#c4c4c4"></div>
<div class="sep" style="left:1530px;top:3px;height:23px;background:#c4c4c4"></div>
<div class="sep" style="left:1629px;top:3px;height:23px;background:#c4c4c4"></div>
<div class="sep" style="left:1693px;top:3px;height:23px;background:#c4c4c4"></div>
<div class="sep" style="left:1733px;top:3px;height:23px;background:#c4c4c4"></div>
<div class="sep" style="left:1773px;top:3px;height:23px;background:#c4c4c4"></div>
<div class="sep" style="left:2148.5px;top:3px;height:23px;background:#c4c4c4"></div>
<div class="sep" style="left:2359px;top:3px;height:23px;background:#c4c4c4"></div>
<div class="t" id="s1" style="letter-spacing:-0.177px;left:55.500px;top:5.500px">Planilha 1 de 1</div>
<div class="t" id="s2" style="letter-spacing:-0.733px;left:745px;top:5.500px">PageStyle_PRODUTOS</div>
<div class="t" id="s3" style="letter-spacing:-0.205px;left:1275px;top:5.500px">Português (Brasil)</div>
<div style="left:1642.500px;top:8px;width:25.500px;height:14px;border:1.400px solid #2a8ad4"></div>
<svg style="left:1672px;top:3px" width="12" height="24" viewBox="0 0 12 24" stroke="#222" stroke-width="1.500" fill="none"><path d="M1.500 1.500h9M1.500 22.500h9M6 1.500v21"/></svg>
<div class="t" id="s4" style="letter-spacing:-0.029px;left:1896px;top:5.500px">Média: ; Soma: 0</div>
<div style="left:2155px;top:13.500px;width:15px;height:2.600px;background:#222"></div>
<div style="left:2173px;top:14.300px;width:163px;height:1px;background:#8a8a8a"></div>
<div style="left:2253px;top:7.500px;width:6px;height:14.500px;background:#e6e6e6;border:1.200px solid #555"></div>
<div style="left:2341px;top:13.500px;width:14.500px;height:2.600px;background:#222"></div><div style="left:2347px;top:7.500px;width:2.600px;height:14.500px;background:#222"></div>
<div class="t" id="s5" style="letter-spacing:-0.246px;left:2370px;top:5.500px">100%</div>
</div>
</div>
<svg id="scribble" style="position:absolute;left:0;top:0" width="2427" height="1239" viewBox="0 0 2427 1239" fill="none" stroke="#ed1c24" stroke-linejoin="round" stroke-linecap="round">
<path d="M1422.5 370.5 L1431.0 360.0 L1445.3 341.3 L1456.0 333.0 L1467.0 327.5 L1475.0 319.0 L1482.8 309.7 L1487.8 299.8" stroke-width="7.0"/>
<path d="M1489.0 299.5 L1484.0 309.0 L1478.9 319.6 L1472.0 332.0 L1467.0 343.3 L1462.0 357.0 L1459.0 369.0 L1450.0 380.0 L1439.3 392.7" stroke-width="6.0"/>
<path d="M1439.3 392.7 L1436.5 404.0 L1433.4 418.5 L1428.0 431.0 L1422.5 444.2 L1417.6 458.0 L1416.6 477.8 L1415.8 500.0 L1415.6 520.0 L1415.8 560.0 L1415.8 582.3 L1417.5 594.0 L1420.0 604.0 L1424.5 621.0 L1429.6 640.5 L1431.5 654.0 L1433.3 667.0 L1434.5 718.0 L1433.8 766.4 L1432.3 780.0 L1430.0 822.0 L1430.0 909.0 L1430.8 960.0 L1431.6 1006.0 L1434.9 1031.8" stroke-width="4.8"/>
<path d="M1434.9 1031.8 L1441.0 1047.0 L1449.4 1060.8 L1461.0 1074.0 L1473.6 1086.6 L1489.7 1099.6 L1499.0 1114.0 L1509.0 1128.6 L1517.0 1139.0 L1525.3 1148.0 L1541.0 1152.5 L1557.5 1156.0 L1573.7 1159.3 L1612.4 1159.3" stroke-width="3.0"/>
<path d="M1612.4 1159.3 L1629.0 1157.5 L1644.7 1154.4 L1658.0 1150.0 L1670.5 1146.4 L1700.0 1145.5 L1728.6 1144.7 L1736.0 1141.0 L1741.5 1136.7" stroke-width="4.2"/>
<path d="M1741.5 1136.7 L1745.0 1125.0 L1748.0 1112.5 L1751.2 1086.6 L1753.5 1065.0 L1756.0 1044.7 L1759.0 1033.0 L1762.5 1022.0 L1764.0 995.0 L1765.7 967.2 L1768.0 938.0 L1770.6 909.0 L1773.5 889.0 L1777.0 870.4 L1780.5 853.0 L1785.0 834.9 L1789.0 817.0 L1793.2 799.4 L1796.6 773.7 L1801.4 742.2 L1804.5 724.0 L1807.5 705.9 L1811.0 676.8 L1813.5 645.3" stroke-width="4.9"/>
<path d="M1813.5 645.3 L1814.2 610.0 L1814.7 572.7 L1817.0 536.3 L1817.5 500.0 L1818.0 470.0 L1818.0 438.2" stroke-width="3.6"/>
<path d="M1487.8 299.8 L1508.6 299.8 L1538.2 302.7 L1577.8 304.7 L1597.6 309.7 L1637.0 316.6 L1672.7 326.5 L1706.4 331.8 L1740.0 337.4 L1746.5 342.0 L1751.8 349.2 L1757.5 359.0 L1763.7 369.0 L1768.5 379.0 L1773.6 388.8 L1779.5 396.7 L1788.0 397.3 L1797.3 397.7 L1802.5 403.0 L1807.2 408.6 L1811.5 414.0 L1815.0 420.4 L1817.0 429.0 L1818.0 438.2" stroke-width="3.5"/>
</svg>
</body></html>
